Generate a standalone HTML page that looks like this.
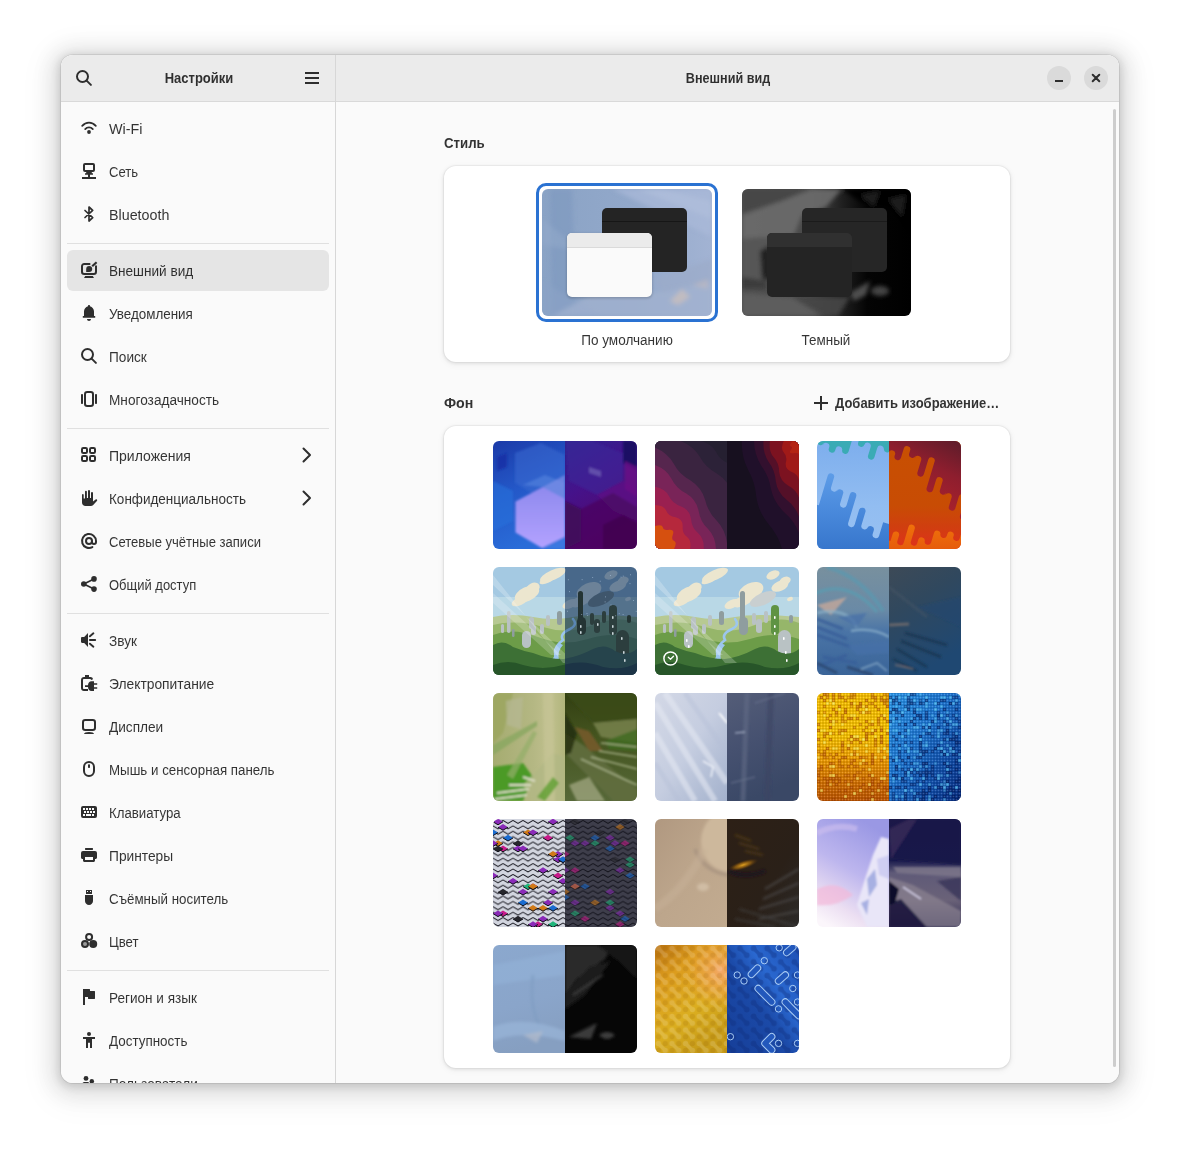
<!DOCTYPE html>
<html lang="ru"><head><meta charset="utf-8"><title>Настройки — Внешний вид</title>
<style>
html,body{margin:0;padding:0}
body{width:1180px;height:1150px;background:#fff;position:relative;overflow:hidden;
 font-family:"Liberation Sans",sans-serif;font-size:14px;line-height:20px;color:rgba(0,0,0,.8)}
.win{position:absolute;left:61px;top:55px;width:1058px;height:1028px;border-radius:12px;overflow:hidden;background:#fafafa}
.shadow{position:absolute;left:61px;top:55px;width:1058px;height:1028px;border-radius:12px;
 box-shadow:0 0 0 1px rgba(0,0,0,.07),0 2px 8px 2px rgba(0,0,0,.13),0 3px 20px 10px rgba(0,0,0,.09),0 6px 32px 16px rgba(0,0,0,.04)}
.hdr{position:absolute;left:0;top:0;width:1058px;height:46px;background:#ebebeb;border-bottom:1px solid #d9d9d9}
.vsep{position:absolute;left:274px;top:0;width:1px;height:1028px;background:#d7d7d7}
.t{position:absolute;white-space:nowrap;height:20px}
.ic{position:absolute;display:block;overflow:visible}
.row{position:absolute;left:6px;width:262px;height:41px;border-radius:6px}
.row.sel{background:#e5e5e5}
.sep{position:absolute;left:6px;width:262px;height:1px;background:#e0e0e0}
.wb{position:absolute;top:11px;width:24px;height:24px;border-radius:12px;background:#dadada}
.card{position:absolute;left:383px;width:566px;background:#fff;border-radius:12px;
 box-shadow:0 0 0 1px rgba(0,0,0,.03),0 1px 3px 1px rgba(0,0,0,.07),0 2px 6px 2px rgba(0,0,0,.03)}
.th{position:absolute;width:144px;height:108px;border-radius:6px;overflow:hidden;display:block}
.sb{position:absolute;left:1052px;top:54px;width:3px;height:958px;border-radius:2px;background:#cdcdcd}
</style></head><body>
<div class="shadow"></div>
<div class="win">
<div class="hdr"></div>
<div class="vsep"></div>

<svg class="ic" style="left:15px;top:15px" width="16" height="16" viewBox="0 0 16 16" ><circle cx="6.5" cy="6.5" r="5.5" fill="none" stroke="#2e2e2e" stroke-width="2"/><path d="M10.6 10.600 L14.9 14.9" fill="none" stroke="#2e2e2e" stroke-width="2" stroke-linecap="round"/></svg>
<div class="t " style="top:13px;left:-12.5px;width:300px;text-align:center;transform:scaleX(0.8961);font-weight:700;font-size:14.5px;"><span id="tx0">Настройки</span></div>
<svg class="ic" style="left:244px;top:17px" width="14" height="12" viewBox="0 0 14 12"><path d="M0 0h14v2H0zM0 5h14v2H0zM0 10h14v2H0z" fill="#2e2e2e"/></svg>
<div class="t " style="top:13px;left:516.7px;width:300px;text-align:center;transform:scaleX(0.8689);font-weight:700;font-size:14.5px;"><span id="tx1">Внешний вид</span></div>
<div class="wb" style="left:986px"></div><div class="wb" style="left:1023px"></div>
<svg class="ic" style="left:986px;top:11px" width="24" height="24" viewBox="0 0 24 24"><rect x="8" y="14" width="8" height="2" fill="#2e2e2e"/></svg>
<svg class="ic" style="left:1023px;top:11px" width="24" height="24" viewBox="0 0 24 24"><path d="M8.700 8.700 L15.300 15.300 M15.300 8.700 L8.700 15.300" stroke="#2e2e2e" stroke-width="2" stroke-linecap="round" fill="none"/></svg>
<div class="sep" style="top:188px"></div>
<div class="sep" style="top:373px"></div>
<div class="sep" style="top:558px"></div>
<div class="sep" style="top:915px"></div>
<div class="row" style="top:53px"></div>
<svg class="ic" style="left:20px;top:65px" width="16" height="16" viewBox="0 0 16 16" ><path d="M1.2 5.9 C4.9 1.6 11.1 1.6 14.8 5.9" fill="none" stroke="#2e2e2e" stroke-width="1.8" stroke-linecap="round"/><path d="M4.2 9.1 C6.2 6.7 9.8 6.7 11.8 9.1" fill="none" stroke="#2e2e2e" stroke-width="1.8" stroke-linecap="round"/><circle cx="8" cy="12" r="1.9" fill="#2e2e2e"/></svg>
<div class="t " style="top:64px;left:48px;transform-origin:0 50%;transform:scaleX(1.0262);"><span id="tx2">Wi-Fi</span></div>
<div class="row" style="top:96px"></div>
<svg class="ic" style="left:20px;top:108px" width="16" height="16" viewBox="0 0 16 16" ><rect x="3" y="1" width="10" height="7" rx="1" fill="none" stroke="#2e2e2e" stroke-width="2"/><path d="M5.2 9h5.6v1.2H12v1.6H9V14h6v2H1v-2h6v-2.2H4v-1.6h1.2z" fill="#2e2e2e"/></svg>
<div class="t " style="top:107px;left:48px;transform-origin:0 50%;transform:scaleX(0.9333);"><span id="tx3">Сеть</span></div>
<div class="row" style="top:139px"></div>
<svg class="ic" style="left:20px;top:151px" width="16" height="16" viewBox="0 0 16 16" ><path d="M4 4.5 L11.7 11.6 L8 15 V1 L11.7 4.4 L4 11.5" fill="none" stroke="#2e2e2e" stroke-width="1.7" stroke-linecap="round" stroke-linejoin="round"/></svg>
<div class="t " style="top:150px;left:48px;transform-origin:0 50%;transform:scaleX(1.0208);"><span id="tx4">Bluetooth</span></div>
<div class="row sel" style="top:195px"></div>
<svg class="ic" style="left:20px;top:207px" width="16" height="16" viewBox="0 0 16 16" ><path d="M9.3 2 H3.2 A2.2 2.2 0 0 0 1 4.2 V9.8 A2.2 2.2 0 0 0 3.2 12 H12.8 A2.2 2.2 0 0 0 15 9.8 V3.4" fill="none" stroke="#2e2e2e" stroke-width="2" stroke-linecap="butt"/><path d="M15.6 0.3 L11.2 4.2" fill="none" stroke="#2e2e2e" stroke-width="2.2"/><path d="M5.2 10 V7 A3 3 0 1 1 8.2 10 Z" fill="#2e2e2e"/><path d="M4.2 14 h7.6 l1.2 2 h-10z" fill="#2e2e2e"/></svg>
<div class="t " style="top:206px;left:48px;transform-origin:0 50%;transform:scaleX(0.9695);"><span id="tx5">Внешний вид</span></div>
<div class="row" style="top:238px"></div>
<svg class="ic" style="left:20px;top:250px" width="16" height="16" viewBox="0 0 16 16" ><path d="M8 0c-.6 0-1 .4-1 1v.3C4.7 1.9 3 4 3 6.5V11H1.8v1.8h12.4V11H13V6.5C13 4 11.300 1.9 9 1.3V1c0-.6-.4-1-1-1z" fill="#2e2e2e"/><path d="M6 14h4c0 1.100-.9 2-2 2s-2-.9-2-2z" fill="#2e2e2e"/></svg>
<div class="t " style="top:249px;left:48px;transform-origin:0 50%;transform:scaleX(0.9583);"><span id="tx6">Уведомления</span></div>
<div class="row" style="top:281px"></div>
<svg class="ic" style="left:20px;top:293px" width="16" height="16" viewBox="0 0 16 16" ><circle cx="6.5" cy="6.5" r="5.5" fill="none" stroke="#2e2e2e" stroke-width="2"/><path d="M10.6 10.600 L14.9 14.9" fill="none" stroke="#2e2e2e" stroke-width="2" stroke-linecap="round"/></svg>
<div class="t " style="top:292px;left:48px;transform-origin:0 50%;transform:scaleX(0.9737);"><span id="tx7">Поиск</span></div>
<div class="row" style="top:324px"></div>
<svg class="ic" style="left:20px;top:336px" width="16" height="16" viewBox="0 0 16 16" ><rect x="4" y="1" width="8" height="14" rx="2.2" fill="none" stroke="#2e2e2e" stroke-width="2"/><rect x="0" y="3" width="2" height="10" rx=".8" fill="#2e2e2e"/><rect x="14" y="3" width="2" height="10" rx=".8" fill="#2e2e2e"/></svg>
<div class="t " style="top:335px;left:48px;transform-origin:0 50%;transform:scaleX(0.9750);"><span id="tx8">Многозадачность</span></div>
<div class="row" style="top:380px"></div>
<svg class="ic" style="left:20px;top:392px" width="16" height="16" viewBox="0 0 16 16" ><rect x="1" y="1" width="5" height="5" rx="1.300" fill="none" stroke="#2e2e2e" stroke-width="2"/><rect x="1" y="9" width="5" height="5" rx="1.300" fill="none" stroke="#2e2e2e" stroke-width="2"/><rect x="9" y="1" width="5" height="5" rx="1.300" fill="none" stroke="#2e2e2e" stroke-width="2"/><rect x="9" y="9" width="5" height="5" rx="1.300" fill="none" stroke="#2e2e2e" stroke-width="2"/></svg>
<div class="t " style="top:391px;left:48px;transform-origin:0 50%;transform:scaleX(1.0002);"><span id="tx9">Приложения</span></div>
<svg class="ic" style="left:238px;top:392px" width="16" height="16" viewBox="0 0 16 16" ><path d="M4.500 1.500 L11 8 L4.500 14.500" fill="none" stroke="#2e2e2e" stroke-width="2" stroke-linecap="round" stroke-linejoin="round"/></svg>
<div class="row" style="top:423px"></div>
<svg class="ic" style="left:20px;top:435px" width="16" height="16" viewBox="0 0 16 16" ><path d="M1 4.900a.85.85 0 0 1 1.700 0V8.500H4V1.800a.95.95 0 0 1 1.900 0V8H7V.95a1 1 0 0 1 2 0V8h1V2.900a1 1 0 0 1 2 0V11.500l2.600-2a.95.95 0 0 1 1.300 1.400L12.200 15c-.6.600-1.400 1-2.400 1H4.500C2.500 16 1 14.500 1 12.500z" fill="#2e2e2e"/></svg>
<div class="t " style="top:434px;left:48px;transform-origin:0 50%;transform:scaleX(0.9645);"><span id="tx10">Конфиденциальность</span></div>
<svg class="ic" style="left:238px;top:435px" width="16" height="16" viewBox="0 0 16 16" ><path d="M4.500 1.500 L11 8 L4.500 14.500" fill="none" stroke="#2e2e2e" stroke-width="2" stroke-linecap="round" stroke-linejoin="round"/></svg>
<div class="row" style="top:466px"></div>
<svg class="ic" style="left:20px;top:478px" width="16" height="16" viewBox="0 0 16 16" ><path d="M11.400 14.100 A7 7 0 1 1 15 8 v1 a2 2 0 0 1 -4 0 V8" fill="none" stroke="#2e2e2e" stroke-width="2" stroke-linecap="round"/><circle cx="8" cy="8" r="3" fill="none" stroke="#2e2e2e" stroke-width="2"/></svg>
<div class="t " style="top:477px;left:48px;transform-origin:0 50%;transform:scaleX(0.9321);"><span id="tx11">Сетевые учётные записи</span></div>
<div class="row" style="top:509px"></div>
<svg class="ic" style="left:20px;top:521px" width="16" height="16" viewBox="0 0 16 16" ><circle cx="2.800" cy="8" r="2.800" fill="#2e2e2e"/><circle cx="13" cy="2.900" r="2.800" fill="#2e2e2e"/><circle cx="13" cy="13.100" r="2.800" fill="#2e2e2e"/><path d="M13 2.900 L2.800 8 L13 13.100" fill="none" stroke="#2e2e2e" stroke-width="1.700"/></svg>
<div class="t " style="top:520px;left:48px;transform-origin:0 50%;transform:scaleX(0.9270);"><span id="tx12">Общий доступ</span></div>
<div class="row" style="top:565px"></div>
<svg class="ic" style="left:20px;top:577px" width="16" height="16" viewBox="0 0 16 16" ><path d="M7 1v14L3.200 11H1.200C.5 11 0 10.500 0 9.800V6.200C0 5.500.5 5 1.200 5h2z" fill="#2e2e2e"/><path d="M8.900 4.300L12.400 1.300M8.900 8h5.300M8.900 11.700l3.500 3" fill="none" stroke="#2e2e2e" stroke-width="1.900" stroke-linecap="round"/></svg>
<div class="t " style="top:576px;left:48px;transform-origin:0 50%;transform:scaleX(0.9719);"><span id="tx13">Звук</span></div>
<div class="row" style="top:608px"></div>
<svg class="ic" style="left:20px;top:620px" width="16" height="16" viewBox="0 0 16 16" ><path d="M4 0h4v2h1.500c1.300 0 2.300.9 2.500 2.200L10.200 5C10 4.400 9.600 4 9 4H3c-.6 0-1 .4-1 1v8c0 .6.400 1 1 1h4v2H3c-1.700 0-3-1.300-3-3V5c0-1.700 1.300-3 3-3h1z" fill="#2e2e2e"/><path d="M13 6.300v1.900h3.200v1.500H13v2.600h3.200v1.500H13V16h-2.500C8.300 16 7 13.800 7 11.900H4v-1.600h3C7 8.300 8.300 6.300 10.500 6.300z" fill="#2e2e2e"/></svg>
<div class="t " style="top:619px;left:48px;transform-origin:0 50%;transform:scaleX(0.9869);"><span id="tx14">Электропитание</span></div>
<div class="row" style="top:651px"></div>
<svg class="ic" style="left:20px;top:663px" width="16" height="16" viewBox="0 0 16 16" ><rect x="2" y="2" width="12" height="10" rx="2.200" fill="none" stroke="#2e2e2e" stroke-width="2"/><path d="M3 16c0-1.200 2-2 5-2s5 .8 5 2z" fill="#2e2e2e"/></svg>
<div class="t " style="top:662px;left:48px;transform-origin:0 50%;transform:scaleX(0.9746);"><span id="tx15">Дисплеи</span></div>
<div class="row" style="top:694px"></div>
<svg class="ic" style="left:20px;top:706px" width="16" height="16" viewBox="0 0 16 16" ><rect x="3" y="1" width="10" height="14" rx="5" fill="none" stroke="#2e2e2e" stroke-width="2"/><rect x="7" y="3.200" width="2" height="3.800" rx=".8" fill="#2e2e2e"/></svg>
<div class="t " style="top:705px;left:48px;transform-origin:0 50%;transform:scaleX(0.9514);"><span id="tx16">Мышь и сенсорная панель</span></div>
<div class="row" style="top:737px"></div>
<svg class="ic" style="left:20px;top:749px" width="16" height="16" viewBox="0 0 16 16" ><path fill-rule="evenodd" d="M2 2h12a2 2 0 0 1 2 2v8a2 2 0 0 1-2 2H2a2 2 0 0 1-2-2V4a2 2 0 0 1 2-2zM2 4h2v2h-2zM5 4h2v2h-2zM8 4h2v2h-2zM11 4h2v2h-2zM3 7h2v2h-2zM6 7h2v2h-2zM9 7h2v2h-2zM12 7h2v2h-2zM2 10h2v2h-2zM5 10h5v2h-5zM11 10h2v2h-2z" fill="#2e2e2e"/></svg>
<div class="t " style="top:748px;left:48px;transform-origin:0 50%;transform:scaleX(0.9450);"><span id="tx17">Клавиатура</span></div>
<div class="row" style="top:780px"></div>
<svg class="ic" style="left:20px;top:792px" width="16" height="16" viewBox="0 0 16 16" ><rect x="4" y="1" width="8" height="1.900" rx=".6" fill="#2e2e2e"/><path fill-rule="evenodd" d="M2 4h12a2 2 0 0 1 2 2v4.500c0 .8-.7 1.500-1.500 1.500H14v1.500c0 .8-.7 1.500-1.500 1.500h-9C2.700 15 2 14.300 2 13.500V12h-.5C.7 12 0 11.300 0 10.500V6a2 2 0 0 1 2-2zM4 10h8v3H4z" fill="#2e2e2e"/></svg>
<div class="t " style="top:791px;left:48px;transform-origin:0 50%;transform:scaleX(0.9814);"><span id="tx18">Принтеры</span></div>
<div class="row" style="top:823px"></div>
<svg class="ic" style="left:20px;top:835px" width="16" height="16" viewBox="0 0 16 16" ><path fill-rule="evenodd" d="M5.300 0h5.400c.2 0 .3.100.3.300V4H5V.3c0-.2.100-.3.300-.3zM6 1.100h1v1H6zM9 1.100h1v1H9z" fill="#2e2e2e"/><path d="M4 5.100h8V11c0 2.200-1.800 4-4 4s-4-1.800-4-4z" fill="#2e2e2e"/></svg>
<div class="t " style="top:834px;left:48px;transform-origin:0 50%;transform:scaleX(0.9533);"><span id="tx19">Съёмный носитель</span></div>
<div class="row" style="top:866px"></div>
<svg class="ic" style="left:20px;top:878px" width="16" height="16" viewBox="0 0 16 16" ><circle cx="8.100" cy="4" r="3" fill="none" stroke="#2e2e2e" stroke-width="2"/><circle cx="4" cy="11.100" r="3" fill="#9a9a9a" stroke="#2e2e2e" stroke-width="2"/><circle cx="12.200" cy="11.100" r="4" fill="#2e2e2e"/></svg>
<div class="t " style="top:877px;left:48px;transform-origin:0 50%;transform:scaleX(0.9426);"><span id="tx20">Цвет</span></div>
<div class="row" style="top:922px"></div>
<svg class="ic" style="left:20px;top:934px" width="16" height="16" viewBox="0 0 16 16" ><path d="M2 0h6.500c.3 0 .5.200.5.500V2h4.500c.3 0 .5.200.5.500v7c0 .3-.2.500-.5.500H7.500C7.200 10 7 9.800 7 9.500V8H4v8H2z" fill="#2e2e2e"/></svg>
<div class="t " style="top:933px;left:48px;transform-origin:0 50%;transform:scaleX(0.9689);"><span id="tx21">Регион и язык</span></div>
<div class="row" style="top:965px"></div>
<svg class="ic" style="left:20px;top:977px" width="16" height="16" viewBox="0 0 16 16" ><circle cx="8" cy="2" r="2" fill="#2e2e2e"/><path d="M2 5h12v2h-3v9H9v-5.300H7V16H5V7H2z" fill="#2e2e2e"/></svg>
<div class="t " style="top:976px;left:48px;transform-origin:0 50%;transform:scaleX(0.9587);"><span id="tx22">Доступность</span></div>
<div class="row" style="top:1008px"></div>
<svg class="ic" style="left:20px;top:1020px" width="16" height="16" viewBox="0 0 16 16" ><circle cx="5" cy="3.400" r="2.400" fill="#2e2e2e"/><circle cx="10.800" cy="6.300" r="2.200" fill="#2e2e2e"/><path d="M1.300 9c0-1.200 1-2 2.200-2h3c1.200 0 2 .8 2 2v3H1.300zM8.500 13v-2.500c0-.8.700-1.500 1.500-1.500h2c1.100 0 2 .9 2 2v2z" fill="#2e2e2e"/></svg>
<div class="t " style="top:1019px;left:48px;transform-origin:0 50%;transform:scaleX(0.9711);"><span id="tx23">Пользователи</span></div>
<div class="t " style="top:78px;left:383px;transform-origin:0 50%;transform:scaleX(0.9130);font-weight:700;font-size:14.5px;"><span id="tx24">Стиль</span></div>
<div class="card" style="top:111px;height:196px"></div>
<div style="position:absolute;left:475px;top:128px;width:176px;height:133px;border:3px solid #2a72d2;border-radius:10px"></div>
<svg class="th" style="left:481px;top:134px;width:170px;height:127px" viewBox="0 0 170 127"><defs><linearGradient id="lightprev" x1="0" y1="0" x2="1" y2="0"><stop offset="0" stop-color="#8aa3c5"/><stop offset=".5" stop-color="#92a8ca"/><stop offset="1" stop-color="#a2b3d3"/></linearGradient><filter id="blurB"><feGaussianBlur stdDeviation="2"/></filter><filter id="blurA"><feGaussianBlur stdDeviation="1"/></filter></defs><rect width="170" height="127" fill="url(#lightprev)"/><g filter="url(#blurB)"><path d="M8 0 L30 0 L34 127 L10 127z" fill="#7c98be" opacity=".55"/><path d="M70 0 L170 48 L170 0z" fill="#a9b9d8" opacity=".7"/><path d="M95 0 L170 30 L170 12 L120 0z" fill="#b3c0dc" opacity=".6"/><path d="M0 92 L60 127 L0 127z" fill="#8aa3c6" opacity=".7"/><path d="M10 127 L60 100 L110 104 L170 92 L170 127z" fill="#a1b1cf" opacity=".75"/><path d="M112 90 L170 70 L170 92 L120 104z" fill="#9babc9" opacity=".7"/><path d="M128 112 L140 100 L148 108 L136 116z" fill="#cfc0ba" opacity=".7"/><path d="M150 96 L166 90 L166 100z" fill="#c8bcbc" opacity=".5"/><path d="M0 30 L40 62 L0 56z" fill="#93abcc" opacity=".5"/></g><rect x="60" y="19" width="85" height="64" rx="5" fill="#242424"/><rect x="60" y="32" width="85" height="1" fill="#161616"/><rect x="24.500" y="44.500" width="86" height="65" rx="5.500" fill="rgba(0,0,0,.18)" filter="url(#blurA)"/><rect x="25" y="44" width="85" height="64" rx="5" fill="#fafafa"/><path d="M25 58V49a5 5 0 0 1 5-5h75a5 5 0 0 1 5 5v9z" fill="#ebebeb"/><rect x="25" y="58" width="85" height="1" fill="#dadada"/></svg>
<svg class="th" style="left:681px;top:134px;width:169px;height:127px" viewBox="0 0 169 127"><defs><linearGradient id="darkprev" x1="0" y1="0" x2="1" y2="0"><stop offset="0" stop-color="#505050"/><stop offset=".4" stop-color="#4a4a4a"/><stop offset=".6" stop-color="#1e1e1e"/><stop offset=".74" stop-color="#040404"/><stop offset="1" stop-color="#000"/></linearGradient></defs><rect width="169" height="127" fill="url(#darkprev)"/><g filter="url(#blurB)"><path d="M0 0 L70 0 L40 12 L0 24z" fill="#474747"/><path d="M0 26 L40 12 L70 0 L100 0 L84 18 L60 26 L52 46 L0 50z" fill="#6c6c6c" opacity=".9"/><path d="M0 50 L52 46 L50 90 L0 96z" fill="#575757" opacity=".9"/><path d="M18 62 L28 56 L30 92 L20 90z" fill="#1c1c1c" opacity=".9"/><path d="M0 88 L24 92 L24 100 L0 100z" fill="#3a3a3a" opacity=".9"/><path d="M0 104 L50 108 L90 127 L0 127z" fill="#5e5e5e" opacity=".9"/><path d="M50 108 L108 108 L96 127 L80 127z" fill="#454545" opacity=".9"/><path d="M100 0 L169 0 L169 50 L150 20 L120 14z" fill="#050505"/><path d="M118 6 L138 2 L132 18z M146 10 L164 6 L160 28z" fill="#222" opacity=".9"/><path d="M108 104 L128 92 L124 106 L112 112z" fill="#555" opacity=".9"/><ellipse cx="138" cy="102" rx="9" ry="5" fill="#4a4a4a" opacity=".9"/></g><rect x="60" y="19" width="85" height="64" rx="5" fill="#262626"/><rect x="60" y="32" width="85" height="1" fill="#1b1b1b"/><rect x="25" y="44" width="85" height="64" rx="5" fill="#242424"/><path d="M25 58V49a5 5 0 0 1 5-5h75a5 5 0 0 1 5 5v9z" fill="#303030"/></svg>
<div class="t " style="top:275px;left:415.70000000000005px;width:300px;text-align:center;transform:scaleX(0.9682);"><span id="tx25">По умолчанию</span></div>
<div class="t " style="top:275px;left:615.3px;width:300px;text-align:center;transform:scaleX(0.9600);"><span id="tx26">Темный</span></div>
<div class="t " style="top:338px;left:383px;transform-origin:0 50%;transform:scaleX(0.9795);font-weight:700;font-size:14.5px;"><span id="tx27">Фон</span></div>
<svg class="ic" style="left:753px;top:341px" width="14" height="14" viewBox="0 0 14 14"><path d="M6 0h2v6h6v2H8v6H6V8H0V6h6z" fill="#2e2e2e"/></svg>
<div class="t " style="top:338px;left:774px;transform-origin:0 50%;transform:scaleX(0.8962);font-weight:700;font-size:14.5px;"><span id="tx28">Добавить изображение…</span></div>
<div class="card" style="top:371px;height:642px"></div>
<svg class="th" style="left:432px;top:386px" width="144" height="108" viewBox="0 0 144 108"><defs><clipPath id="L0"><rect x="0" y="0" width="72" height="108"/></clipPath><clipPath id="R0"><rect x="72" y="0" width="72" height="108"/></clipPath>
<linearGradient id="a0" x1="0" y1="0" x2=".3" y2="1"><stop offset="0" stop-color="#1b3aa8"/><stop offset=".5" stop-color="#2458c8"/><stop offset="1" stop-color="#2a6cd8"/></linearGradient>
<linearGradient id="b0" x1="0" y1="0" x2=".4" y2="1"><stop offset="0" stop-color="#2c2590"/><stop offset=".45" stop-color="#45128a"/><stop offset="1" stop-color="#54086a"/></linearGradient>
<linearGradient id="c0" x1="0" y1="0" x2="0" y2="1"><stop offset="0" stop-color="#8f8aee"/><stop offset="1" stop-color="#b3a2ff"/></linearGradient>
<filter id="f0"><feGaussianBlur stdDeviation=".8"/></filter></defs>
<g clip-path="url(#L0)"><rect width="72" height="108" fill="url(#a0)"/>
<g filter="url(#f0)">
<path d="M22 12 L48 2 L72 14 L72 44 L46 56 L22 42z" fill="#3a6ad0" opacity=".55"/>
<path d="M4 16 L14 12 L14 26 L4 30z" fill="#1226a0" opacity=".6"/>
<path d="M0 40 L20 50 L20 80 L0 90z" fill="#2a70da" opacity=".6"/>
<path d="M30 44 L52 34 L72 42 L72 62 L50 46z" fill="#5a86e0" opacity=".55"/>
<path d="M50 46 L72 57.700 L72 95.700 L49 107 L22.500 91.600 L22.500 60.400z" fill="url(#c0)"/>
<path d="M50 46 L72 34 L72 58z" fill="#7f8fe8" opacity=".7"/>
<path d="M49 108 L72 96 L72 108z" fill="#3a78e0"/>
</g></g>
<g clip-path="url(#R0)"><rect x="72" width="72" height="108" fill="url(#b0)"/>
<g filter="url(#f0)">
<path d="M72 0 L100 0 L130 12 L130 40 L104 54 L76 40z" fill="#3a2498" opacity=".6"/>
<path d="M130 0 L144 0 L144 30 L130 22z" fill="#1a1060" opacity=".9"/>
<path d="M96 26 L108 30 L108 36 L96 32z" fill="#6a5ab0" opacity=".8"/>
<path d="M104 54 L130 40 L144 48 L144 80 L120 70z" fill="#5c0f86" opacity=".8"/>
<path d="M72 60 L88 68 L120 52 L144 66 L144 108 L72 108z" fill="#4a0760" opacity=".75"/>
<path d="M88 68 L88 100 L72 108 L72 60z" fill="#3c0a58" opacity=".7"/>
<path d="M132 20 L144 26 L144 56 L132 48z" fill="#6a0a86" opacity=".8"/>
<path d="M110 84 L130 74 L144 82 L144 108 L110 108z" fill="#3a0648" opacity=".6"/>
</g></g></svg>
<svg class="th" style="left:594px;top:386px" width="144" height="108" viewBox="0 0 144 108"><defs><clipPath id="L1"><rect x="0" y="0" width="72" height="108"/></clipPath><clipPath id="R1"><rect x="72" y="0" width="72" height="108"/></clipPath></defs><g clip-path="url(#L1)"><rect width="72" height="108" fill="#252031"/><path d="M-5 115 L-5 -5.0 L46.0 -5 L46.0 0.0 Q56.8 2.9 61.0 10.8 Q64.8 19.0 74.4 22.8 Q83.3 27.1 85.2 36.8 Q86.4 47.0 93.4 52.8 Q100.0 58.9 100.0 70.0 L100.0 115z" fill="#2c2238"/><path d="M-5 115 L-5 -5.0 L25.8 -5 L25.8 0.0 Q38.6 5.3 44.8 15.7 Q50.6 26.5 62.2 32.7 Q73.1 39.5 77.1 51.7 Q80.3 64.5 89.3 72.7 Q97.9 81.3 100.0 95.0 L100.0 115z" fill="#3a2440"/><path d="M-5 115 L-5 1.5  L0.0 6.5 Q12.6 12.0 18.6 22.4 Q24.2 33.2 35.6 39.5 Q46.4 46.4 50.0 58.6 Q53.0 71.4 61.8 79.7 Q70.2 88.4 72.0 102.0 L72.0 115z" fill="#56264e"/><path d="M-5 115 L-5 19.1  L0.0 24.1 Q11.6 28.5 16.5 37.8 Q21.0 47.3 31.3 52.6 Q41.0 58.4 43.5 69.4 Q45.4 80.9 53.1 88.1 Q60.4 95.6 61.0 108.0 L61.0 115z" fill="#792458"/><path d="M-5 115 L-5 40.8  L0.0 45.8 Q10.2 47.8 13.9 55.0 Q17.2 62.4 26.3 65.4 Q34.6 68.9 36.0 77.8 Q36.7 87.3 43.2 92.3 Q49.3 97.6 48.8 108.0 L48.8 115z" fill="#9a2050"/><path d="M-5 115 L-5 59.0  L0.0 64.0 Q8.8 64.2 11.1 69.5 Q13.1 75.2 20.7 76.3 Q27.7 77.9 27.7 85.1 Q27.1 92.8 32.1 95.9 Q36.8 99.4 35.0 108.0 L35.0 115z" fill="#b6283c"/><path d="M-5 115 L-5 80.0  L0.0 85.0 Q7.1 83.0 7.9 86.2 Q8.2 89.8 14.2 88.7 Q19.5 88.2 18.0 93.3 Q15.8 99.0 19.3 100.0 Q22.3 101.4 19.0 108.0 L19.0 115z" fill="#d6500f"/></g><g clip-path="url(#R1)"><rect x="72" width="72" height="108" fill="#17101f"/><path d="M86.8 -5 L86.8 0.0 Q86.3 15.6 92.9 28.5 Q100.1 41.2 101.3 56.1 Q103.4 70.7 113.0 82.5 Q123.2 94.0 127.0 108.0 L150 108.0 L150 -5z" fill="#20102a"/><path d="M99.0 -5 L99.0 0.0 Q99.3 14.1 106.4 24.9 Q114.1 35.4 116.1 48.6 Q118.9 61.5 128.9 70.9 Q139.5 79.9 144.0 92.0 L150 92.0 L150 -5z" fill="#32102e"/><path d="M108.5 -5 L108.5 0.0 Q107.6 12.0 113.5 20.7 Q120.1 29.2 120.8 40.4 Q122.4 51.2 131.3 58.6 Q140.7 65.7 144.0 75.7 L150 75.7 L150 -5z" fill="#541028"/><path d="M115.0 -5 L115.0 0.0 Q113.4 9.8 118.5 16.1 Q124.1 22.1 124.2 31.1 Q125.0 39.6 133.0 44.5 Q141.5 49.0 144.0 56.7 L150 56.7 L150 -5z" fill="#7c1220"/><path d="M128.8 -5 L128.8 0.0 Q125.2 7.0 128.6 11.3 Q132.7 15.3 130.8 21.7 Q129.8 27.7 136.2 30.8 Q143.3 33.7 144.0 39.0 L150 39.0 L150 -5z" fill="#a01a18"/><path d="M138.0 -5 L138.0 0.0 Q133.3 4.1 135.6 5.2 Q138.5 6.0 135.5 9.4 Q133.3 12.4 138.6 12.2 Q144.4 11.7 144.0 14.0 L150 14.0 L150 -5z" fill="#b42414"/></g></svg>
<svg class="th" style="left:756px;top:386px" width="144" height="108" viewBox="0 0 144 108"><defs><clipPath id="L2"><rect x="0" y="0" width="72" height="108"/></clipPath><clipPath id="R2"><rect x="72" y="0" width="72" height="108"/></clipPath>
<linearGradient id="a2" x1="0" y1="0" x2="0" y2="108" gradientUnits="userSpaceOnUse"><stop offset="0" stop-color="#7daeed"/><stop offset=".6" stop-color="#92bdf1"/><stop offset="1" stop-color="#98c1f2"/></linearGradient>
<linearGradient id="b2" x1="0" y1="30" x2="0" y2="108" gradientUnits="userSpaceOnUse"><stop offset="0" stop-color="#5e9de8"/><stop offset=".5" stop-color="#4a8adc"/><stop offset="1" stop-color="#3776cc"/></linearGradient>
<linearGradient id="c2" x1="144" y1="0" x2="110" y2="70" gradientUnits="userSpaceOnUse"><stop offset="0" stop-color="#5c1c2a"/><stop offset=".45" stop-color="#8e1e2e"/><stop offset="1" stop-color="#ae222c"/></linearGradient>
<linearGradient id="d2" x1="0" y1="82" x2="0" y2="108" gradientUnits="userSpaceOnUse"><stop offset="0" stop-color="#f0720a"/><stop offset="1" stop-color="#e65c0c"/></linearGradient>
<linearGradient id="e2" x1="0" y1="0" x2="0" y2="108" gradientUnits="userSpaceOnUse"><stop offset="0" stop-color="#c85002"/><stop offset=".6" stop-color="#c84c04"/><stop offset=".8" stop-color="#d03e10"/><stop offset="1" stop-color="#e0301c"/></linearGradient>
</defs>
<g clip-path="url(#L2)"><rect width="72" height="108" fill="url(#a2)"/>
<path transform="matrix(0.958 0.287 0.287 -0.958 0 0)" d="M0.30 300 L0.30 0.30 A3.3 3.3 0 0 1 6.90 0.30 L6.90 -2.30 A3.3 3.3 0 0 0 13.50 -2.30 L13.50 -3.80 A3.3 3.3 0 0 1 20.10 -3.80 L20.10 -2.00 A3.3 3.3 0 0 0 26.70 -2.00 L26.70 -1.10 A3.3 3.3 0 0 1 33.30 -1.10 L33.30 16.70 A3.3 3.3 0 0 0 39.90 16.70 L39.90 10.20 A3.3 3.3 0 0 1 46.50 10.20 L46.50 9.70 A3.3 3.3 0 0 0 53.10 9.70 L53.10 0.80 A3.3 3.3 0 0 1 59.70 0.80 L59.70 10.60 A3.3 3.3 0 0 0 66.30 10.60 L66.30 12.50 A3.3 3.3 0 0 1 72.90 12.50 L72.90 14.70 A3.3 3.3 0 0 0 79.50 14.70 L79.50 13.30 A3.3 3.3 0 0 1 86.10 13.30 L86.10 300z" fill="#3aabb5"/>
<clipPath id="k2"><path transform="matrix(0.958 0.287 0.287 -0.958 0 0)" d="M6.87 -300 L6.87 -86.67 A3.325 3.325 0 0 1 13.52 -86.67 L13.53 -61.00 L20.18 -61.00 L20.18 -29.93 A3.325 3.325 0 0 0 26.82 -29.93 L26.82 -40.27 A3.325 3.325 0 0 1 33.48 -40.27 L33.47 -42.83 A3.325 3.325 0 0 0 40.12 -42.83 L40.12 -53.07 A3.325 3.325 0 0 1 46.78 -53.07 L46.77 -41.83 A3.325 3.325 0 0 0 53.43 -41.83 L53.42 -69.38 A3.325 3.325 0 0 1 60.08 -69.38 L60.08 -54.12 A3.325 3.325 0 0 0 66.73 -54.12 L66.73 -67.88 A3.325 3.325 0 0 1 73.38 -67.88 L73.38 -69.42 A3.325 3.325 0 0 0 80.03 -69.42 L80.02 -73.08 A3.325 3.325 0 0 1 86.67 -73.08 L86.67 -58.80 L93.33 -58.80 L93.33 -58.80 L99.98 -58.80 L99.98 -58.80 L106.63 -58.80 L106.63 -300z"/></clipPath>
<g clip-path="url(#k2)"><rect width="72" height="108" fill="url(#b2)"/></g>
</g>
<g clip-path="url(#R2)"><rect x="72" width="72" height="108" fill="url(#e2)"/>
<clipPath id="m2"><path transform="matrix(0.958 0.287 0.287 -0.958 0 0)" d="M58.67 300 L58.67 1.33 A3.325 3.325 0 0 1 65.33 1.33 L65.32 8.00 L71.97 8.00 L71.97 9.38 A3.325 3.325 0 0 0 78.62 9.38 L78.62 8.03 A3.325 3.325 0 0 1 85.28 8.03 L85.27 17.78 A3.325 3.325 0 0 0 91.92 17.78 L91.92 14.43 A3.325 3.325 0 0 1 98.58 14.43 L98.58 11.48 A3.325 3.325 0 0 0 105.23 11.48 L105.22 -1.17 A3.325 3.325 0 0 1 111.88 -1.17 L111.88 14.07 A3.325 3.325 0 0 0 118.53 14.07 L118.52 -13.57 A3.325 3.325 0 0 1 125.17 -13.57 L125.17 -2.62 A3.325 3.325 0 0 0 131.82 -2.62 L131.83 -12.18 A3.325 3.325 0 0 1 138.47 -12.18 L138.48 -15.32 A3.325 3.325 0 0 0 145.12 -15.32 L145.12 -24.88 A3.325 3.325 0 0 1 151.77 -24.88 L151.78 -12.62 A3.325 3.325 0 0 0 158.43 -12.62 L158.43 -30.68 A3.325 3.325 0 0 1 165.07 -30.68 L165.08 -23.32 A3.325 3.325 0 0 0 171.72 -23.32 L171.72 300z"/></clipPath>
<g clip-path="url(#m2)"><rect x="72" width="72" height="108" fill="url(#c2)"/></g>
<clipPath id="n2"><path transform="matrix(0.958 0.287 0.287 -0.958 0 0)" d="M79.47 -300 L79.47 -69.28 A3.275 3.275 0 0 0 86.03 -69.28 L86.03 -76.72 A3.275 3.275 0 0 1 92.58 -76.72 L92.58 -74.80 L99.13 -74.80 L99.12 -67.17 A3.275 3.275 0 0 0 105.68 -67.17 L105.67 -72.72 A3.275 3.275 0 0 1 112.23 -72.72 L112.22 -56.17 A3.275 3.275 0 0 0 118.78 -56.17 L118.78 -69.32 A3.275 3.275 0 0 1 125.33 -69.32 L125.32 -65.38 A3.275 3.275 0 0 0 131.88 -65.38 L131.88 -64.42 A3.275 3.275 0 0 1 138.43 -64.42 L138.42 -54.48 A3.275 3.275 0 0 0 144.97 -54.48 L144.97 -53.43 A3.275 3.275 0 0 1 151.53 -53.43 L151.53 -51.57 A3.275 3.275 0 0 0 158.08 -51.57 L158.07 -52.62 A3.275 3.275 0 0 1 164.62 -52.62 L164.62 -49.27 A3.275 3.275 0 0 0 171.18 -49.27 L171.17 -56.73 A3.275 3.275 0 0 1 177.72 -56.73 L177.72 -300z"/></clipPath>
<g clip-path="url(#n2)"><rect x="72" width="72" height="108" fill="url(#d2)"/></g>
</g></svg>
<svg class="th" style="left:432px;top:512px" width="144" height="108" viewBox="0 0 144 108"><defs><clipPath id="L3"><rect x="0" y="0" width="72" height="108"/></clipPath><clipPath id="R3"><rect x="72" y="0" width="72" height="108"/></clipPath></defs><g clip-path="url(#L3)"><rect x="0" y="0" width="144" height="108" fill="#a4c9e2"/><rect x="0" y="30" width="144" height="25" fill="#b9d8e6"/><ellipse cx="34" cy="27" rx="13" ry="7" fill="#ece6cf" transform="rotate(-24 34 27)"/><ellipse cx="27" cy="34" rx="9" ry="4" fill="#ece6cf" transform="rotate(-24 27 34)"/><ellipse cx="40" cy="21" rx="7" ry="5" fill="#ece6cf" transform="rotate(-24 40 21)"/><ellipse cx="60" cy="8" rx="14" ry="5" fill="#ece6cf" transform="rotate(-24 60 8)"/><ellipse cx="54" cy="13" rx="8" ry="3" fill="#ece6cf" transform="rotate(-24 54 13)"/><ellipse cx="77" cy="37" rx="8" ry="4" fill="#ece6cf" transform="rotate(-24 77 37)"/><ellipse cx="96" cy="24" rx="13" ry="8" fill="#ece6cf" transform="rotate(-24 96 24)"/><ellipse cx="88" cy="34" rx="11" ry="5" fill="#ece6cf" transform="rotate(-24 88 34)"/><ellipse cx="108" cy="32" rx="14" ry="6" fill="#c9cfd0" transform="rotate(-24 108 32)"/><ellipse cx="118" cy="8" rx="7" ry="4" fill="#ece6cf" transform="rotate(-24 118 8)"/><ellipse cx="125" cy="19" rx="9" ry="5" fill="#ece6cf" transform="rotate(-24 125 19)"/><ellipse cx="130" cy="14" rx="6" ry="4" fill="#ece6cf" transform="rotate(-24 130 14)"/><ellipse cx="135" cy="32" rx="3" ry="2" fill="#ece6cf" transform="rotate(-24 135 32)"/><path d="M0 50 Q20 46 40 50 T80 50 T144 50 V70 H0z" fill="#b7c992"/><path d="M0 58 Q25 52 50 60 T100 58 T144 56 V80 H0z" fill="#96b66a"/><path d="M0 68 Q20 60 45 70 Q70 80 95 72 Q120 64 144 72 V95 H0z" fill="#6c9c48"/><rect x="14" y="44" width="3.5" height="22" rx="1.8" fill="#b9c2c4"/><rect x="8" y="57" width="3" height="9" rx="1.5" fill="#b9c2c4"/><rect x="19" y="62" width="2.5" height="8" rx="1.2" fill="#8f9d9f"/><rect x="29" y="64" width="9" height="17" rx="4.5" fill="#b9c2c4"/><rect x="36" y="50" width="5" height="12" rx="2.5" fill="#b9c2c4"/><rect x="38" y="58" width="5" height="10" rx="2.5" fill="#b9c2c4"/><rect x="47" y="57" width="4" height="10" rx="2.0" fill="#b9c2c4"/><rect x="53" y="48" width="4" height="11" rx="2.0" fill="#b9c2c4"/><rect x="64" y="44" width="5" height="14" rx="2.5" fill="#8f9d9f"/><rect x="85" y="24" width="5" height="40" rx="2.5" fill="#8f9d9f"/><rect x="84" y="50" width="9" height="18" rx="4.5" fill="#8f9d9f"/><rect x="97" y="46" width="4" height="12" rx="2.0" fill="#b9c2c4"/><rect x="101" y="52" width="6" height="14" rx="3.0" fill="#b9c2c4"/><rect x="109" y="44" width="4" height="12" rx="2.0" fill="#b9c2c4"/><rect x="116" y="38" width="8" height="30" rx="4.0" fill="#5f9344"/><rect x="123" y="63" width="13" height="30" rx="6.5" fill="#b9c2c4"/><rect x="134" y="48" width="4" height="8" rx="2.0" fill="#8f9d9f"/><path d="M80 52 Q85 58 77 62 Q66 67 70 73 Q62 79 62 85 Q64 90 60 93" fill="none" stroke="#9cc6ee" stroke-width="2.600" stroke-linecap="round"/><path d="M66 76 Q60 82 61 93 L66 93 Q64 84 70 78z" fill="#9cc6ee"/><path d="M0 78 Q10 72 20 80 Q30 84 40 86 Q55 92 70 92 Q85 90 100 82 Q112 76 122 84 Q134 90 144 82 V108 H0z" fill="#3d7035"/><path d="M0 98 Q15 92 30 98 Q50 104 70 98 Q90 92 110 100 Q130 104 144 96 V108 H0z" fill="#275529"/><path d="M0 8 L0 18 L82 96 L70 96z" fill="#fff" opacity=".22"/><path d="M0 26 L0 36 L58 88 L68 88z" fill="#fff" opacity=".2"/></g><g clip-path="url(#R3)"><rect x="0" y="0" width="144" height="108" fill="#48688a"/><rect x="0" y="30" width="144" height="25" fill="#54728c"/><ellipse cx="34" cy="27" rx="13" ry="7" fill="#6c8298" transform="rotate(-24 34 27)"/><ellipse cx="27" cy="34" rx="9" ry="4" fill="#6c8298" transform="rotate(-24 27 34)"/><ellipse cx="40" cy="21" rx="7" ry="5" fill="#6c8298" transform="rotate(-24 40 21)"/><ellipse cx="60" cy="8" rx="14" ry="5" fill="#6c8298" transform="rotate(-24 60 8)"/><ellipse cx="54" cy="13" rx="8" ry="3" fill="#6c8298" transform="rotate(-24 54 13)"/><ellipse cx="77" cy="37" rx="8" ry="4" fill="#6c8298" transform="rotate(-24 77 37)"/><ellipse cx="96" cy="24" rx="13" ry="8" fill="#6c8298" transform="rotate(-24 96 24)"/><ellipse cx="88" cy="34" rx="11" ry="5" fill="#6c8298" transform="rotate(-24 88 34)"/><ellipse cx="108" cy="32" rx="14" ry="6" fill="#3f566c" transform="rotate(-24 108 32)"/><ellipse cx="118" cy="8" rx="7" ry="4" fill="#6c8298" transform="rotate(-24 118 8)"/><ellipse cx="125" cy="19" rx="9" ry="5" fill="#6c8298" transform="rotate(-24 125 19)"/><ellipse cx="130" cy="14" rx="6" ry="4" fill="#6c8298" transform="rotate(-24 130 14)"/><ellipse cx="135" cy="32" rx="3" ry="2" fill="#6c8298" transform="rotate(-24 135 32)"/><path d="M0 50 Q20 46 40 50 T80 50 T144 50 V70 H0z" fill="#4a6868"/><path d="M0 58 Q25 52 50 60 T100 58 T144 56 V80 H0z" fill="#3f5f5c"/><path d="M0 68 Q20 60 45 70 Q70 80 95 72 Q120 64 144 72 V95 H0z" fill="#335450"/><rect x="14" y="44" width="3.5" height="22" rx="1.8" fill="#2c3e3e"/><rect x="8" y="57" width="3" height="9" rx="1.5" fill="#2c3e3e"/><rect x="19" y="62" width="2.5" height="8" rx="1.2" fill="#243434"/><rect x="29" y="64" width="9" height="17" rx="4.5" fill="#2c3e3e"/><rect x="36" y="50" width="5" height="12" rx="2.5" fill="#2c3e3e"/><rect x="38" y="58" width="5" height="10" rx="2.5" fill="#2c3e3e"/><rect x="47" y="57" width="4" height="10" rx="2.0" fill="#2c3e3e"/><rect x="53" y="48" width="4" height="11" rx="2.0" fill="#2c3e3e"/><rect x="64" y="44" width="5" height="14" rx="2.5" fill="#243434"/><rect x="85" y="24" width="5" height="40" rx="2.5" fill="#243434"/><rect x="84" y="50" width="9" height="18" rx="4.5" fill="#243434"/><rect x="97" y="46" width="4" height="12" rx="2.0" fill="#2c3e3e"/><rect x="101" y="52" width="6" height="14" rx="3.0" fill="#2c3e3e"/><rect x="109" y="44" width="4" height="12" rx="2.0" fill="#2c3e3e"/><rect x="116" y="38" width="8" height="30" rx="4.0" fill="#2c3e3e"/><rect x="123" y="63" width="13" height="30" rx="6.5" fill="#2c3e3e"/><rect x="134" y="48" width="4" height="8" rx="2.0" fill="#243434"/><path d="M80 52 Q85 58 77 62 Q66 67 70 73 Q62 79 62 85 Q64 90 60 93" fill="none" stroke="#5a86b4" stroke-width="2.600" stroke-linecap="round"/><path d="M66 76 Q60 82 61 93 L66 93 Q64 84 70 78z" fill="#5a86b4"/><path d="M0 78 Q10 72 20 80 Q30 84 40 86 Q55 92 70 92 Q85 90 100 82 Q112 76 122 84 Q134 90 144 82 V108 H0z" fill="#26444c"/><path d="M0 98 Q15 92 30 98 Q50 104 70 98 Q90 92 110 100 Q130 104 144 96 V108 H0z" fill="#1c3446"/><rect x="117.6" y="37.6" width=".8" height=".8" fill="#b9d0e8" opacity=".8"/><rect x="129.7" y="47.2" width=".8" height=".8" fill="#b9d0e8" opacity=".8"/><rect x="125.8" y="46.3" width=".8" height=".8" fill="#b9d0e8" opacity=".8"/><rect x="76.0" y="24.3" width=".8" height=".8" fill="#b9d0e8" opacity=".8"/><rect x="140.0" y="33.2" width=".8" height=".8" fill="#b9d0e8" opacity=".8"/><rect x="137.1" y="7.4" width=".8" height=".8" fill="#b9d0e8" opacity=".8"/><rect x="106.8" y="13.8" width=".8" height=".8" fill="#b9d0e8" opacity=".8"/><rect x="112.1" y="29.5" width=".8" height=".8" fill="#b9d0e8" opacity=".8"/><rect x="74.9" y="12.4" width=".8" height=".8" fill="#b9d0e8" opacity=".8"/><rect x="93.6" y="46.0" width=".8" height=".8" fill="#b9d0e8" opacity=".8"/><rect x="127.6" y="9.7" width=".8" height=".8" fill="#b9d0e8" opacity=".8"/><rect x="129.8" y="8.7" width=".8" height=".8" fill="#b9d0e8" opacity=".8"/><rect x="117.2" y="8.1" width=".8" height=".8" fill="#b9d0e8" opacity=".8"/><rect x="74.1" y="43.8" width=".8" height=".8" fill="#b9d0e8" opacity=".8"/><rect x="88.7" y="12.3" width=".8" height=".8" fill="#b9d0e8" opacity=".8"/><rect x="142.8" y="43.9" width=".8" height=".8" fill="#b9d0e8" opacity=".8"/><rect x="94.3" y="48.2" width=".8" height=".8" fill="#b9d0e8" opacity=".8"/><rect x="111.7" y="34.5" width=".8" height=".8" fill="#b9d0e8" opacity=".8"/><rect x="88.3" y="47.2" width=".8" height=".8" fill="#b9d0e8" opacity=".8"/><rect x="122.3" y="48.4" width=".8" height=".8" fill="#b9d0e8" opacity=".8"/><rect x="136.6" y="16.3" width=".8" height=".8" fill="#b9d0e8" opacity=".8"/><rect x="99.3" y="10.0" width=".8" height=".8" fill="#b9d0e8" opacity=".8"/><rect x="87" y="58" width="1.600" height="3" rx=".8" fill="#c8d4d8"/><rect x="87" y="64" width="1.600" height="3" rx=".8" fill="#c8d4d8"/><rect x="104" y="56" width="1.600" height="3" rx=".8" fill="#c8d4d8"/><rect x="119" y="49" width="1.600" height="3" rx=".8" fill="#c8d4d8"/><rect x="119" y="58" width="1.600" height="3" rx=".8" fill="#c8d4d8"/><rect x="119" y="65" width="1.600" height="3" rx=".8" fill="#c8d4d8"/><rect x="128" y="70" width="1.600" height="3" rx=".8" fill="#c8d4d8"/><rect x="130" y="84" width="1.600" height="3" rx=".8" fill="#c8d4d8"/><rect x="131" y="92" width="1.600" height="3" rx=".8" fill="#c8d4d8"/></g></svg>
<svg class="th" style="left:594px;top:512px" width="144" height="108" viewBox="0 0 144 108"><g><rect x="0" y="0" width="144" height="108" fill="#a4c9e2"/><rect x="0" y="30" width="144" height="25" fill="#b9d8e6"/><ellipse cx="34" cy="27" rx="13" ry="7" fill="#ece6cf" transform="rotate(-24 34 27)"/><ellipse cx="27" cy="34" rx="9" ry="4" fill="#ece6cf" transform="rotate(-24 27 34)"/><ellipse cx="40" cy="21" rx="7" ry="5" fill="#ece6cf" transform="rotate(-24 40 21)"/><ellipse cx="60" cy="8" rx="14" ry="5" fill="#ece6cf" transform="rotate(-24 60 8)"/><ellipse cx="54" cy="13" rx="8" ry="3" fill="#ece6cf" transform="rotate(-24 54 13)"/><ellipse cx="77" cy="37" rx="8" ry="4" fill="#ece6cf" transform="rotate(-24 77 37)"/><ellipse cx="96" cy="24" rx="13" ry="8" fill="#ece6cf" transform="rotate(-24 96 24)"/><ellipse cx="88" cy="34" rx="11" ry="5" fill="#ece6cf" transform="rotate(-24 88 34)"/><ellipse cx="108" cy="32" rx="14" ry="6" fill="#c9cfd0" transform="rotate(-24 108 32)"/><ellipse cx="118" cy="8" rx="7" ry="4" fill="#ece6cf" transform="rotate(-24 118 8)"/><ellipse cx="125" cy="19" rx="9" ry="5" fill="#ece6cf" transform="rotate(-24 125 19)"/><ellipse cx="130" cy="14" rx="6" ry="4" fill="#ece6cf" transform="rotate(-24 130 14)"/><ellipse cx="135" cy="32" rx="3" ry="2" fill="#ece6cf" transform="rotate(-24 135 32)"/><path d="M0 50 Q20 46 40 50 T80 50 T144 50 V70 H0z" fill="#b7c992"/><path d="M0 58 Q25 52 50 60 T100 58 T144 56 V80 H0z" fill="#96b66a"/><path d="M0 68 Q20 60 45 70 Q70 80 95 72 Q120 64 144 72 V95 H0z" fill="#6c9c48"/><rect x="14" y="44" width="3.5" height="22" rx="1.8" fill="#b9c2c4"/><rect x="8" y="57" width="3" height="9" rx="1.5" fill="#b9c2c4"/><rect x="19" y="62" width="2.5" height="8" rx="1.2" fill="#8f9d9f"/><rect x="29" y="64" width="9" height="17" rx="4.5" fill="#b9c2c4"/><rect x="36" y="50" width="5" height="12" rx="2.5" fill="#b9c2c4"/><rect x="38" y="58" width="5" height="10" rx="2.5" fill="#b9c2c4"/><rect x="47" y="57" width="4" height="10" rx="2.0" fill="#b9c2c4"/><rect x="53" y="48" width="4" height="11" rx="2.0" fill="#b9c2c4"/><rect x="64" y="44" width="5" height="14" rx="2.5" fill="#8f9d9f"/><rect x="85" y="24" width="5" height="40" rx="2.5" fill="#8f9d9f"/><rect x="84" y="50" width="9" height="18" rx="4.5" fill="#8f9d9f"/><rect x="97" y="46" width="4" height="12" rx="2.0" fill="#b9c2c4"/><rect x="101" y="52" width="6" height="14" rx="3.0" fill="#b9c2c4"/><rect x="109" y="44" width="4" height="12" rx="2.0" fill="#b9c2c4"/><rect x="116" y="38" width="8" height="30" rx="4.0" fill="#5f9344"/><rect x="123" y="63" width="13" height="30" rx="6.5" fill="#b9c2c4"/><rect x="134" y="48" width="4" height="8" rx="2.0" fill="#8f9d9f"/><path d="M80 52 Q85 58 77 62 Q66 67 70 73 Q62 79 62 85 Q64 90 60 93" fill="none" stroke="#9cc6ee" stroke-width="2.600" stroke-linecap="round"/><path d="M66 76 Q60 82 61 93 L66 93 Q64 84 70 78z" fill="#9cc6ee"/><path d="M0 78 Q10 72 20 80 Q30 84 40 86 Q55 92 70 92 Q85 90 100 82 Q112 76 122 84 Q134 90 144 82 V108 H0z" fill="#3d7035"/><path d="M0 98 Q15 92 30 98 Q50 104 70 98 Q90 92 110 100 Q130 104 144 96 V108 H0z" fill="#275529"/><path d="M0 8 L0 18 L82 96 L70 96z" fill="#fff" opacity=".22"/><path d="M0 26 L0 36 L58 88 L68 88z" fill="#fff" opacity=".2"/></g><rect x="128" y="70" width="1.600" height="3" rx=".8" fill="#fff"/><rect x="130" y="84" width="1.600" height="3" rx=".8" fill="#fff"/><rect x="131" y="92" width="1.600" height="3" rx=".8" fill="#fff"/><rect x="119" y="49" width="1.600" height="3" rx=".8" fill="#fff"/><rect x="119" y="58" width="1.600" height="3" rx=".8" fill="#fff"/><rect x="119" y="65" width="1.600" height="3" rx=".8" fill="#fff"/><rect x="31" y="72" width="1.600" height="3" rx=".8" fill="#fff"/><rect x="33" y="78" width="1.600" height="3" rx=".8" fill="#fff"/><g transform="translate(7.500,83.500)"><circle cx="8" cy="8" r="6.600" fill="none" stroke="#fff" stroke-width="1.500"/><path d="M5.800 6.800 L8 8.800 L11 5.800" fill="none" stroke="#fff" stroke-width="1.300" stroke-linecap="round" stroke-linejoin="round"/></g></svg>
<svg class="th" style="left:756px;top:512px" width="144" height="108" viewBox="0 0 144 108"><defs><clipPath id="L5"><rect x="0" y="0" width="72" height="108"/></clipPath><clipPath id="R5"><rect x="72" y="0" width="72" height="108"/></clipPath>
<linearGradient id="a5" x1="0" y1="0" x2="0" y2="1"><stop offset="0" stop-color="#78909e"/><stop offset=".4" stop-color="#6a8aa6"/><stop offset=".6" stop-color="#4a74a6"/><stop offset="1" stop-color="#3a6498"/></linearGradient>
<linearGradient id="b5" x1="0" y1="0" x2=".4" y2="1"><stop offset="0" stop-color="#3d4a57"/><stop offset=".4" stop-color="#30485e"/><stop offset="1" stop-color="#1f4872"/></linearGradient>
<filter id="f5"><feGaussianBlur stdDeviation="1"/></filter></defs>
<g clip-path="url(#L5)"><rect width="72" height="108" fill="url(#a5)"/><g filter="url(#f5)" fill="none">
<path d="M-5 28 Q30 10 60 45" stroke="#5a9bb0" stroke-width="3" opacity=".8"/>
<path d="M10 0 Q45 10 66 44" stroke="#5a98b0" stroke-width="4" opacity=".7"/>
<path d="M0 38 L30 30 L14 48z" fill="#c4a89a" opacity=".8"/>
<path d="M0 46 Q30 40 40 60" stroke="#8ab0c8" stroke-width="3" opacity=".7"/>
<path d="M0 52 L26 62 M0 60 L30 72 M0 68 L34 80 M6 90 L40 96 M0 100 L30 88" stroke="#3a5e98" stroke-width="3" opacity=".8"/>
<path d="M20 50 L50 46 L40 60z" fill="#4a72a8" opacity=".8"/>
<path d="M34 64 Q55 60 72 70" stroke="#8db2cc" stroke-width="2.500" opacity=".7"/>
<path d="M30 78 L72 74 L72 86 L40 88z" fill="#4670a8" opacity=".7"/>
<path d="M0 96 L20 106 M30 100 L56 108" stroke="#2a466e" stroke-width="3" opacity=".8"/>
<path d="M44 102 L60 96 L70 104" stroke="#90b0cc" stroke-width="2" opacity=".6"/>
</g></g>
<g clip-path="url(#R5)"><rect x="72" width="72" height="108" fill="url(#b5)"/><g filter="url(#f5)" fill="none">
<path d="M72 58 L92 57" stroke="#8a7870" stroke-width="3" opacity=".6"/>
<path d="M88 66 L130 78 M84 74 L124 90 M80 82 L110 100 M76 92 L100 104" stroke="#1a3450" stroke-width="2.500" opacity=".8"/>
<path d="M72 20 L110 50" stroke="#485868" stroke-width="3" opacity=".4"/>
<path d="M100 40 L144 30 L144 60z" fill="#204670" opacity=".5"/>
<path d="M78 98 L96 102" stroke="#a08070" stroke-width="1.500" opacity=".6"/>
</g></g></svg>
<svg class="th" style="left:432px;top:638px" width="144" height="108" viewBox="0 0 144 108"><defs><clipPath id="L6"><rect x="0" y="0" width="72" height="108"/></clipPath><clipPath id="R6"><rect x="72" y="0" width="72" height="108"/></clipPath>
<linearGradient id="a6" x1="0" y1="0" x2="1" y2="0"><stop offset="0" stop-color="#a5ac70"/><stop offset=".55" stop-color="#b4b783"/><stop offset=".8" stop-color="#c0c08e"/><stop offset="1" stop-color="#b1b57c"/></linearGradient>
<linearGradient id="b6" x1="0" y1="0" x2="0" y2="1"><stop offset="0" stop-color="#323f12"/><stop offset=".4" stop-color="#44541f"/><stop offset="1" stop-color="#566838"/></linearGradient>
<filter id="f6"><feGaussianBlur stdDeviation=".9"/></filter></defs>
<g clip-path="url(#L6)"><rect width="72" height="108" fill="url(#a6)"/><g filter="url(#f6)">
<path d="M0 0 L20 0 L10 40 L0 50z" fill="#9ba55e" opacity=".8"/>
<path d="M13 8 L30 4 L28 36 L14 32z" fill="#b7b894" opacity=".7"/>
<path d="M0 74 L30 70 L40 84 L30 108 L0 108z" fill="#4b9a26"/>
<path d="M0 52 L44 28 L44 33 L0 62z" fill="#8aa860" opacity=".8"/>
<path d="M14 82 L40 38 L44 40 L20 86z" fill="#93ae68" opacity=".7"/>
<path d="M30 92 L60 60 L72 64 L72 108 L40 108z" fill="#b2b884" opacity=".8"/>
<path d="M50 0 L60 0 L62 108 L52 108z" fill="#c6c596" opacity=".7"/>
<path d="M4 100 L36 96 M16 92 L38 92 M30 84 L42 88 M2 106 L34 102" stroke="#dcdcc4" stroke-width="2" fill="none"/>
<path d="M44 104 L60 84 L66 90 L52 108z" fill="#5fa030" opacity=".8"/>
</g></g>
<g clip-path="url(#R6)"><rect x="72" width="72" height="108" fill="url(#b6)"/><g filter="url(#f6)">
<path d="M72 0 L144 0 L144 26 L100 30z" fill="#3b4a17" opacity=".9"/>
<path d="M100 30 L144 26 L144 50 L108 44z" fill="#7a8650" opacity=".8"/>
<path d="M112 48 L144 36 L144 58 L116 56z" fill="#3f6a20" opacity=".8"/>
<path d="M82 34 L96 38 L110 58 L96 58z" fill="#7a5a2a" opacity=".8"/>
<path d="M72 40 L90 52 L144 96 L144 108 L120 108 L72 60z" fill="#5f6d3e" opacity=".9"/>
<path d="M108 50 L144 54 M106 58 L144 64 M98 64 L144 76 M88 66 L144 92" stroke="#a9b28a" stroke-width="1.500" fill="none" opacity=".9"/>
<path d="M76 92 L96 84 L112 108 L84 108z" fill="#a7ab86" opacity=".7"/>
<path d="M72 20 L84 40 L78 60 L72 62z" fill="#232c0c" opacity=".8"/>
</g></g></svg>
<svg class="th" style="left:594px;top:638px" width="144" height="108" viewBox="0 0 144 108"><defs><clipPath id="L7"><rect x="0" y="0" width="72" height="108"/></clipPath><clipPath id="R7"><rect x="72" y="0" width="72" height="108"/></clipPath>
<linearGradient id="a7" x1="0" y1="0" x2="1" y2="1"><stop offset="0" stop-color="#d3d8e6"/><stop offset=".5" stop-color="#c5cde0"/><stop offset="1" stop-color="#a3b1cc"/></linearGradient>
<linearGradient id="b7" x1="0" y1="0" x2=".3" y2="1"><stop offset="0" stop-color="#545d78"/><stop offset=".5" stop-color="#465170"/><stop offset="1" stop-color="#3a4866"/></linearGradient>
<filter id="f7"><feGaussianBlur stdDeviation="1.200"/></filter></defs>
<g clip-path="url(#L7)"><rect width="72" height="108" fill="url(#a7)"/><g filter="url(#f7)" fill="none">
<path d="M0 10 L60 108 M10 0 L72 90 M0 40 L40 108" stroke="#e6eaf3" stroke-width="6" opacity=".55"/>
<path d="M30 0 L72 60 M0 70 L24 108" stroke="#b3bfd6" stroke-width="5" opacity=".4"/>
<path d="M64 20 L72 30 L66 22" stroke="#fff" stroke-width="1.500"/>
<path d="M48 68 L58 74 L56 84" stroke="#eef1f8" stroke-width="1.500"/>
</g></g>
<g clip-path="url(#R7)"><rect x="72" width="72" height="108" fill="url(#b7)"/><g filter="url(#f7)" fill="none">
<path d="M92 0 L88 108" stroke="#5f6a86" stroke-width="5" opacity=".6"/>
<path d="M116 0 L112 108" stroke="#3a4562" stroke-width="6" opacity=".6"/>
<path d="M80 40 L90 39" stroke="#b9c2d6" stroke-width="1.200"/>
<path d="M100 10 L130 0 M76 90 L100 84" stroke="#66708c" stroke-width="1.500" opacity=".7"/>
</g></g></svg>
<svg class="th" style="left:756px;top:638px" width="144" height="108" viewBox="0 0 144 108"><defs><clipPath id="L8"><rect x="0" y="0" width="72" height="108"/></clipPath><clipPath id="R8"><rect x="72" y="0" width="72" height="108"/></clipPath>
<linearGradient id="a8" x1="0" y1="0" x2="0" y2="1"><stop offset="0" stop-color="#ffc400"/><stop offset=".4" stop-color="#ffc800"/><stop offset=".62" stop-color="#f5a000"/><stop offset=".8" stop-color="#dc7800"/><stop offset="1" stop-color="#c25600"/></linearGradient>
<linearGradient id="b8" x1="0" y1="0" x2="1" y2="1"><stop offset="0" stop-color="#2a98ee"/><stop offset=".4" stop-color="#1c78d8"/><stop offset=".75" stop-color="#0e4cac"/><stop offset="1" stop-color="#062c84"/></linearGradient>
<pattern id="p8" width="3" height="3" patternUnits="userSpaceOnUse"><path fill-rule="evenodd" d="M0 0h3v3H0zM1.500 .25a1.250 1.250 0 1 0 0 2.500a1.250 1.250 0 1 0 0-2.500z" fill="#000" opacity=".2"/><circle cx="1.500" cy="1.500" r=".8" fill="#fff" opacity=".18"/></pattern>
</defs>
<g clip-path="url(#L8)"><rect width="72" height="108" fill="url(#a8)"/><rect x="6" y="0" width="3" height="3" fill="#b04800" opacity="0.60"/><rect x="9" y="0" width="3" height="3" fill="#b04800" opacity="0.48"/><rect x="15" y="0" width="3" height="3" fill="#b04800" opacity="0.49"/><rect x="21" y="0" width="3" height="3" fill="#b04800" opacity="0.43"/><rect x="33" y="0" width="3" height="3" fill="#b04800" opacity="0.38"/><rect x="36" y="0" width="3" height="3" fill="#b04800" opacity="0.48"/><rect x="54" y="0" width="3" height="3" fill="#b04800" opacity="0.40"/><rect x="66" y="0" width="3" height="3" fill="#b04800" opacity="0.39"/><rect x="69" y="0" width="3" height="3" fill="#b04800" opacity="0.40"/><rect x="3" y="3" width="3" height="3" fill="#b04800" opacity="0.61"/><rect x="9" y="3" width="3" height="3" fill="#b04800" opacity="0.43"/><rect x="15" y="3" width="3" height="3" fill="#b04800" opacity="0.45"/><rect x="21" y="3" width="3" height="3" fill="#b04800" opacity="0.51"/><rect x="24" y="3" width="3" height="3" fill="#b04800" opacity="0.50"/><rect x="30" y="3" width="3" height="3" fill="#b04800" opacity="0.30"/><rect x="33" y="3" width="3" height="3" fill="#b04800" opacity="0.49"/><rect x="36" y="3" width="3" height="3" fill="#b04800" opacity="0.33"/><rect x="54" y="3" width="3" height="3" fill="#b04800" opacity="0.50"/><rect x="57" y="3" width="3" height="3" fill="#b04800" opacity="0.51"/><rect x="63" y="3" width="3" height="3" fill="#b04800" opacity="0.49"/><rect x="69" y="3" width="3" height="3" fill="#b04800" opacity="0.39"/><rect x="6" y="6" width="3" height="3" fill="#b04800" opacity="0.55"/><rect x="12" y="6" width="3" height="3" fill="#fff46a" opacity="0.53"/><rect x="15" y="6" width="3" height="3" fill="#b04800" opacity="0.43"/><rect x="27" y="6" width="3" height="3" fill="#b04800" opacity="0.42"/><rect x="48" y="6" width="3" height="3" fill="#b04800" opacity="0.58"/><rect x="57" y="6" width="3" height="3" fill="#b04800" opacity="0.46"/><rect x="63" y="6" width="3" height="3" fill="#b04800" opacity="0.52"/><rect x="66" y="6" width="3" height="3" fill="#b04800" opacity="0.57"/><rect x="69" y="6" width="3" height="3" fill="#b04800" opacity="0.57"/><rect x="9" y="9" width="3" height="3" fill="#fff46a" opacity="0.57"/><rect x="15" y="9" width="3" height="3" fill="#fff46a" opacity="0.64"/><rect x="33" y="9" width="3" height="3" fill="#b04800" opacity="0.60"/><rect x="36" y="9" width="3" height="3" fill="#fff46a" opacity="0.37"/><rect x="42" y="9" width="3" height="3" fill="#b04800" opacity="0.63"/><rect x="51" y="9" width="3" height="3" fill="#b04800" opacity="0.32"/><rect x="54" y="9" width="3" height="3" fill="#b04800" opacity="0.44"/><rect x="66" y="9" width="3" height="3" fill="#b04800" opacity="0.50"/><rect x="69" y="9" width="3" height="3" fill="#b04800" opacity="0.33"/><rect x="6" y="12" width="3" height="3" fill="#b04800" opacity="0.46"/><rect x="21" y="12" width="3" height="3" fill="#b04800" opacity="0.55"/><rect x="33" y="12" width="3" height="3" fill="#b04800" opacity="0.32"/><rect x="39" y="12" width="3" height="3" fill="#b04800" opacity="0.52"/><rect x="42" y="12" width="3" height="3" fill="#b04800" opacity="0.57"/><rect x="45" y="12" width="3" height="3" fill="#fff46a" opacity="0.35"/><rect x="48" y="12" width="3" height="3" fill="#b04800" opacity="0.46"/><rect x="57" y="12" width="3" height="3" fill="#b04800" opacity="0.47"/><rect x="69" y="12" width="3" height="3" fill="#b04800" opacity="0.65"/><rect x="15" y="15" width="3" height="3" fill="#b04800" opacity="0.52"/><rect x="21" y="15" width="3" height="3" fill="#fff46a" opacity="0.57"/><rect x="27" y="15" width="3" height="3" fill="#b04800" opacity="0.54"/><rect x="39" y="15" width="3" height="3" fill="#b04800" opacity="0.51"/><rect x="48" y="15" width="3" height="3" fill="#fff46a" opacity="0.60"/><rect x="60" y="15" width="3" height="3" fill="#b04800" opacity="0.51"/><rect x="0" y="18" width="3" height="3" fill="#b04800" opacity="0.37"/><rect x="6" y="18" width="3" height="3" fill="#b04800" opacity="0.32"/><rect x="18" y="18" width="3" height="3" fill="#b04800" opacity="0.57"/><rect x="27" y="18" width="3" height="3" fill="#b04800" opacity="0.63"/><rect x="42" y="18" width="3" height="3" fill="#b04800" opacity="0.42"/><rect x="45" y="18" width="3" height="3" fill="#fff46a" opacity="0.58"/><rect x="48" y="18" width="3" height="3" fill="#b04800" opacity="0.38"/><rect x="51" y="18" width="3" height="3" fill="#b04800" opacity="0.34"/><rect x="6" y="21" width="3" height="3" fill="#fff46a" opacity="0.43"/><rect x="12" y="21" width="3" height="3" fill="#b04800" opacity="0.45"/><rect x="18" y="21" width="3" height="3" fill="#b04800" opacity="0.34"/><rect x="24" y="21" width="3" height="3" fill="#b04800" opacity="0.39"/><rect x="33" y="21" width="3" height="3" fill="#fff46a" opacity="0.37"/><rect x="36" y="21" width="3" height="3" fill="#fff46a" opacity="0.44"/><rect x="63" y="21" width="3" height="3" fill="#b04800" opacity="0.41"/><rect x="66" y="21" width="3" height="3" fill="#fff46a" opacity="0.53"/><rect x="9" y="24" width="3" height="3" fill="#b04800" opacity="0.40"/><rect x="24" y="24" width="3" height="3" fill="#b04800" opacity="0.44"/><rect x="30" y="24" width="3" height="3" fill="#b04800" opacity="0.49"/><rect x="33" y="24" width="3" height="3" fill="#b04800" opacity="0.55"/><rect x="39" y="24" width="3" height="3" fill="#b04800" opacity="0.52"/><rect x="60" y="24" width="3" height="3" fill="#b04800" opacity="0.49"/><rect x="66" y="24" width="3" height="3" fill="#b04800" opacity="0.49"/><rect x="12" y="27" width="3" height="3" fill="#b04800" opacity="0.55"/><rect x="15" y="27" width="3" height="3" fill="#fff46a" opacity="0.51"/><rect x="18" y="27" width="3" height="3" fill="#b04800" opacity="0.30"/><rect x="24" y="27" width="3" height="3" fill="#b04800" opacity="0.35"/><rect x="27" y="27" width="3" height="3" fill="#b04800" opacity="0.33"/><rect x="48" y="27" width="3" height="3" fill="#b04800" opacity="0.54"/><rect x="54" y="27" width="3" height="3" fill="#fff46a" opacity="0.45"/><rect x="60" y="27" width="3" height="3" fill="#b04800" opacity="0.51"/><rect x="69" y="27" width="3" height="3" fill="#b04800" opacity="0.54"/><rect x="0" y="30" width="3" height="3" fill="#b04800" opacity="0.47"/><rect x="15" y="30" width="3" height="3" fill="#fff46a" opacity="0.39"/><rect x="24" y="30" width="3" height="3" fill="#fff46a" opacity="0.45"/><rect x="42" y="30" width="3" height="3" fill="#b04800" opacity="0.37"/><rect x="51" y="30" width="3" height="3" fill="#b04800" opacity="0.35"/><rect x="54" y="30" width="3" height="3" fill="#b04800" opacity="0.49"/><rect x="60" y="30" width="3" height="3" fill="#b04800" opacity="0.37"/><rect x="12" y="33" width="3" height="3" fill="#b04800" opacity="0.58"/><rect x="36" y="33" width="3" height="3" fill="#b04800" opacity="0.42"/><rect x="48" y="33" width="3" height="3" fill="#b04800" opacity="0.49"/><rect x="63" y="33" width="3" height="3" fill="#b04800" opacity="0.32"/><rect x="0" y="36" width="3" height="3" fill="#b04800" opacity="0.59"/><rect x="3" y="36" width="3" height="3" fill="#fff46a" opacity="0.39"/><rect x="6" y="36" width="3" height="3" fill="#fff46a" opacity="0.36"/><rect x="21" y="36" width="3" height="3" fill="#b04800" opacity="0.36"/><rect x="24" y="36" width="3" height="3" fill="#b04800" opacity="0.50"/><rect x="27" y="36" width="3" height="3" fill="#b04800" opacity="0.53"/><rect x="45" y="36" width="3" height="3" fill="#b04800" opacity="0.43"/><rect x="54" y="36" width="3" height="3" fill="#fff46a" opacity="0.49"/><rect x="57" y="36" width="3" height="3" fill="#b04800" opacity="0.60"/><rect x="63" y="36" width="3" height="3" fill="#b04800" opacity="0.64"/><rect x="69" y="36" width="3" height="3" fill="#fff46a" opacity="0.53"/><rect x="6" y="39" width="3" height="3" fill="#b04800" opacity="0.37"/><rect x="9" y="39" width="3" height="3" fill="#b04800" opacity="0.49"/><rect x="12" y="39" width="3" height="3" fill="#fff46a" opacity="0.61"/><rect x="15" y="39" width="3" height="3" fill="#b04800" opacity="0.31"/><rect x="21" y="39" width="3" height="3" fill="#b04800" opacity="0.41"/><rect x="24" y="39" width="3" height="3" fill="#fff46a" opacity="0.40"/><rect x="48" y="39" width="3" height="3" fill="#b04800" opacity="0.56"/><rect x="51" y="39" width="3" height="3" fill="#b04800" opacity="0.32"/><rect x="54" y="39" width="3" height="3" fill="#b04800" opacity="0.59"/><rect x="69" y="39" width="3" height="3" fill="#b04800" opacity="0.55"/><rect x="6" y="42" width="3" height="3" fill="#b04800" opacity="0.50"/><rect x="33" y="42" width="3" height="3" fill="#b04800" opacity="0.64"/><rect x="36" y="42" width="3" height="3" fill="#fff46a" opacity="0.49"/><rect x="39" y="42" width="3" height="3" fill="#fff46a" opacity="0.59"/><rect x="48" y="42" width="3" height="3" fill="#b04800" opacity="0.61"/><rect x="57" y="42" width="3" height="3" fill="#fff46a" opacity="0.43"/><rect x="63" y="42" width="3" height="3" fill="#b04800" opacity="0.63"/><rect x="0" y="45" width="3" height="3" fill="#b04800" opacity="0.53"/><rect x="12" y="45" width="3" height="3" fill="#b04800" opacity="0.45"/><rect x="30" y="45" width="3" height="3" fill="#b04800" opacity="0.31"/><rect x="33" y="45" width="3" height="3" fill="#fff46a" opacity="0.35"/><rect x="36" y="45" width="3" height="3" fill="#b04800" opacity="0.50"/><rect x="39" y="45" width="3" height="3" fill="#b04800" opacity="0.51"/><rect x="45" y="45" width="3" height="3" fill="#fff46a" opacity="0.64"/><rect x="48" y="45" width="3" height="3" fill="#b04800" opacity="0.61"/><rect x="57" y="45" width="3" height="3" fill="#b04800" opacity="0.56"/><rect x="63" y="45" width="3" height="3" fill="#b04800" opacity="0.47"/><rect x="6" y="48" width="3" height="3" fill="#fff46a" opacity="0.55"/><rect x="24" y="48" width="3" height="3" fill="#b04800" opacity="0.44"/><rect x="33" y="48" width="3" height="3" fill="#b04800" opacity="0.47"/><rect x="42" y="48" width="3" height="3" fill="#b04800" opacity="0.53"/><rect x="57" y="48" width="3" height="3" fill="#b04800" opacity="0.40"/><rect x="63" y="48" width="3" height="3" fill="#b04800" opacity="0.64"/><rect x="0" y="51" width="3" height="3" fill="#b04800" opacity="0.30"/><rect x="24" y="51" width="3" height="3" fill="#b04800" opacity="0.64"/><rect x="30" y="51" width="3" height="3" fill="#fff46a" opacity="0.49"/><rect x="48" y="51" width="3" height="3" fill="#fff46a" opacity="0.59"/><rect x="57" y="51" width="3" height="3" fill="#b04800" opacity="0.44"/><rect x="69" y="51" width="3" height="3" fill="#b04800" opacity="0.37"/><rect x="9" y="54" width="3" height="3" fill="#b04800" opacity="0.57"/><rect x="15" y="54" width="3" height="3" fill="#fff46a" opacity="0.49"/><rect x="18" y="54" width="3" height="3" fill="#fff46a" opacity="0.37"/><rect x="24" y="54" width="3" height="3" fill="#b04800" opacity="0.33"/><rect x="30" y="54" width="3" height="3" fill="#b04800" opacity="0.57"/><rect x="36" y="54" width="3" height="3" fill="#fff46a" opacity="0.46"/><rect x="39" y="54" width="3" height="3" fill="#fff46a" opacity="0.56"/><rect x="60" y="54" width="3" height="3" fill="#fff46a" opacity="0.42"/><rect x="66" y="54" width="3" height="3" fill="#fff46a" opacity="0.65"/><rect x="0" y="57" width="3" height="3" fill="#b04800" opacity="0.31"/><rect x="6" y="57" width="3" height="3" fill="#b04800" opacity="0.47"/><rect x="24" y="57" width="3" height="3" fill="#b04800" opacity="0.42"/><rect x="36" y="57" width="3" height="3" fill="#b04800" opacity="0.33"/><rect x="48" y="57" width="3" height="3" fill="#fff46a" opacity="0.48"/><rect x="60" y="57" width="3" height="3" fill="#fff46a" opacity="0.52"/><rect x="63" y="57" width="3" height="3" fill="#b04800" opacity="0.32"/><rect x="69" y="57" width="3" height="3" fill="#fff46a" opacity="0.40"/><rect x="3" y="60" width="3" height="3" fill="#b04800" opacity="0.38"/><rect x="6" y="60" width="3" height="3" fill="#b04800" opacity="0.61"/><rect x="12" y="60" width="3" height="3" fill="#b04800" opacity="0.33"/><rect x="18" y="60" width="3" height="3" fill="#b04800" opacity="0.55"/><rect x="33" y="60" width="3" height="3" fill="#fff46a" opacity="0.54"/><rect x="36" y="60" width="3" height="3" fill="#b04800" opacity="0.47"/><rect x="39" y="60" width="3" height="3" fill="#fff46a" opacity="0.46"/><rect x="54" y="60" width="3" height="3" fill="#b04800" opacity="0.57"/><rect x="0" y="63" width="3" height="3" fill="#fff46a" opacity="0.40"/><rect x="6" y="63" width="3" height="3" fill="#b04800" opacity="0.38"/><rect x="9" y="63" width="3" height="3" fill="#b04800" opacity="0.30"/><rect x="15" y="63" width="3" height="3" fill="#b04800" opacity="0.47"/><rect x="24" y="63" width="3" height="3" fill="#b04800" opacity="0.55"/><rect x="27" y="63" width="3" height="3" fill="#b04800" opacity="0.58"/><rect x="42" y="63" width="3" height="3" fill="#b04800" opacity="0.61"/><rect x="45" y="63" width="3" height="3" fill="#b04800" opacity="0.33"/><rect x="48" y="63" width="3" height="3" fill="#b04800" opacity="0.31"/><rect x="54" y="63" width="3" height="3" fill="#b04800" opacity="0.50"/><rect x="57" y="63" width="3" height="3" fill="#fff46a" opacity="0.46"/><rect x="66" y="63" width="3" height="3" fill="#fff46a" opacity="0.57"/><rect x="69" y="63" width="3" height="3" fill="#b04800" opacity="0.31"/><rect x="21" y="66" width="3" height="3" fill="#b04800" opacity="0.50"/><rect x="33" y="66" width="3" height="3" fill="#b04800" opacity="0.37"/><rect x="36" y="66" width="3" height="3" fill="#b04800" opacity="0.56"/><rect x="45" y="66" width="3" height="3" fill="#fff46a" opacity="0.57"/><rect x="54" y="66" width="3" height="3" fill="#b04800" opacity="0.65"/><rect x="63" y="66" width="3" height="3" fill="#b04800" opacity="0.46"/><rect x="12" y="69" width="3" height="3" fill="#b04800" opacity="0.59"/><rect x="15" y="69" width="3" height="3" fill="#b04800" opacity="0.39"/><rect x="21" y="69" width="3" height="3" fill="#b04800" opacity="0.40"/><rect x="33" y="69" width="3" height="3" fill="#b04800" opacity="0.52"/><rect x="42" y="69" width="3" height="3" fill="#fff46a" opacity="0.40"/><rect x="45" y="69" width="3" height="3" fill="#b04800" opacity="0.32"/><rect x="48" y="69" width="3" height="3" fill="#b04800" opacity="0.55"/><rect x="54" y="69" width="3" height="3" fill="#b04800" opacity="0.63"/><rect x="3" y="72" width="3" height="3" fill="#b04800" opacity="0.56"/><rect x="9" y="72" width="3" height="3" fill="#b04800" opacity="0.32"/><rect x="12" y="72" width="3" height="3" fill="#fff46a" opacity="0.42"/><rect x="15" y="72" width="3" height="3" fill="#fff46a" opacity="0.62"/><rect x="21" y="72" width="3" height="3" fill="#b04800" opacity="0.34"/><rect x="24" y="72" width="3" height="3" fill="#b04800" opacity="0.44"/><rect x="30" y="72" width="3" height="3" fill="#b04800" opacity="0.48"/><rect x="36" y="72" width="3" height="3" fill="#b04800" opacity="0.47"/><rect x="39" y="72" width="3" height="3" fill="#b04800" opacity="0.36"/><rect x="0" y="75" width="3" height="3" fill="#b04800" opacity="0.37"/><rect x="3" y="75" width="3" height="3" fill="#b04800" opacity="0.43"/><rect x="45" y="75" width="3" height="3" fill="#b04800" opacity="0.40"/><rect x="51" y="75" width="3" height="3" fill="#fff46a" opacity="0.49"/><rect x="0" y="78" width="3" height="3" fill="#b04800" opacity="0.32"/><rect x="12" y="78" width="3" height="3" fill="#b04800" opacity="0.34"/><rect x="39" y="78" width="3" height="3" fill="#b04800" opacity="0.34"/><rect x="42" y="78" width="3" height="3" fill="#b04800" opacity="0.30"/><rect x="69" y="78" width="3" height="3" fill="#fff46a" opacity="0.38"/><rect x="0" y="81" width="3" height="3" fill="#b04800" opacity="0.58"/><rect x="12" y="81" width="3" height="3" fill="#fff46a" opacity="0.46"/><rect x="15" y="81" width="3" height="3" fill="#fff46a" opacity="0.61"/><rect x="18" y="81" width="3" height="3" fill="#b04800" opacity="0.41"/><rect x="27" y="81" width="3" height="3" fill="#b04800" opacity="0.34"/><rect x="30" y="81" width="3" height="3" fill="#b04800" opacity="0.38"/><rect x="36" y="81" width="3" height="3" fill="#b04800" opacity="0.59"/><rect x="51" y="81" width="3" height="3" fill="#b04800" opacity="0.60"/><rect x="54" y="81" width="3" height="3" fill="#fff46a" opacity="0.50"/><rect x="69" y="81" width="3" height="3" fill="#b04800" opacity="0.49"/><rect x="6" y="84" width="3" height="3" fill="#b04800" opacity="0.55"/><rect x="9" y="84" width="3" height="3" fill="#b04800" opacity="0.32"/><rect x="12" y="84" width="3" height="3" fill="#b04800" opacity="0.64"/><rect x="15" y="84" width="3" height="3" fill="#b04800" opacity="0.54"/><rect x="18" y="84" width="3" height="3" fill="#b04800" opacity="0.51"/><rect x="21" y="84" width="3" height="3" fill="#b04800" opacity="0.51"/><rect x="36" y="84" width="3" height="3" fill="#b04800" opacity="0.32"/><rect x="39" y="84" width="3" height="3" fill="#fff46a" opacity="0.49"/><rect x="45" y="84" width="3" height="3" fill="#b04800" opacity="0.37"/><rect x="54" y="84" width="3" height="3" fill="#b04800" opacity="0.40"/><rect x="57" y="84" width="3" height="3" fill="#b04800" opacity="0.31"/><rect x="63" y="84" width="3" height="3" fill="#fff46a" opacity="0.56"/><rect x="66" y="84" width="3" height="3" fill="#fff46a" opacity="0.57"/><rect x="0" y="87" width="3" height="3" fill="#b04800" opacity="0.51"/><rect x="9" y="87" width="3" height="3" fill="#b04800" opacity="0.56"/><rect x="15" y="87" width="3" height="3" fill="#b04800" opacity="0.53"/><rect x="21" y="87" width="3" height="3" fill="#b04800" opacity="0.59"/><rect x="27" y="87" width="3" height="3" fill="#b04800" opacity="0.47"/><rect x="33" y="87" width="3" height="3" fill="#b04800" opacity="0.48"/><rect x="54" y="87" width="3" height="3" fill="#b04800" opacity="0.65"/><rect x="63" y="87" width="3" height="3" fill="#b04800" opacity="0.58"/><rect x="9" y="90" width="3" height="3" fill="#b04800" opacity="0.55"/><rect x="12" y="90" width="3" height="3" fill="#fff46a" opacity="0.36"/><rect x="18" y="90" width="3" height="3" fill="#b04800" opacity="0.58"/><rect x="30" y="90" width="3" height="3" fill="#fff46a" opacity="0.41"/><rect x="45" y="90" width="3" height="3" fill="#b04800" opacity="0.57"/><rect x="51" y="90" width="3" height="3" fill="#fff46a" opacity="0.54"/><rect x="54" y="90" width="3" height="3" fill="#b04800" opacity="0.64"/><rect x="60" y="90" width="3" height="3" fill="#b04800" opacity="0.55"/><rect x="33" y="93" width="3" height="3" fill="#b04800" opacity="0.53"/><rect x="42" y="93" width="3" height="3" fill="#b04800" opacity="0.55"/><rect x="51" y="93" width="3" height="3" fill="#b04800" opacity="0.61"/><rect x="60" y="93" width="3" height="3" fill="#b04800" opacity="0.39"/><rect x="66" y="93" width="3" height="3" fill="#b04800" opacity="0.64"/><rect x="69" y="93" width="3" height="3" fill="#b04800" opacity="0.35"/><rect x="3" y="96" width="3" height="3" fill="#fff46a" opacity="0.52"/><rect x="9" y="96" width="3" height="3" fill="#b04800" opacity="0.32"/><rect x="21" y="96" width="3" height="3" fill="#b04800" opacity="0.42"/><rect x="27" y="96" width="3" height="3" fill="#b04800" opacity="0.61"/><rect x="42" y="96" width="3" height="3" fill="#fff46a" opacity="0.55"/><rect x="48" y="96" width="3" height="3" fill="#b04800" opacity="0.33"/><rect x="54" y="96" width="3" height="3" fill="#b04800" opacity="0.62"/><rect x="60" y="96" width="3" height="3" fill="#fff46a" opacity="0.46"/><rect x="69" y="96" width="3" height="3" fill="#b04800" opacity="0.59"/><rect x="36" y="99" width="3" height="3" fill="#fff46a" opacity="0.63"/><rect x="54" y="99" width="3" height="3" fill="#fff46a" opacity="0.36"/><rect x="69" y="99" width="3" height="3" fill="#fff46a" opacity="0.38"/><rect x="27" y="102" width="3" height="3" fill="#fff46a" opacity="0.56"/><rect x="54" y="102" width="3" height="3" fill="#b04800" opacity="0.60"/><rect x="15" y="105" width="3" height="3" fill="#b04800" opacity="0.60"/><rect x="24" y="105" width="3" height="3" fill="#b04800" opacity="0.47"/><rect x="27" y="105" width="3" height="3" fill="#b04800" opacity="0.37"/><rect x="48" y="105" width="3" height="3" fill="#b04800" opacity="0.42"/><rect x="51" y="105" width="3" height="3" fill="#b04800" opacity="0.51"/><rect x="54" y="105" width="3" height="3" fill="#fff46a" opacity="0.53"/><rect x="60" y="105" width="3" height="3" fill="#b04800" opacity="0.38"/><rect width="72" height="108" fill="url(#p8)"/></g><g clip-path="url(#R8)"><rect x="72" width="72" height="108" fill="url(#b8)"/><rect x="90" y="0" width="3" height="3" fill="#58ccff" opacity="0.40"/><rect x="93" y="0" width="3" height="3" fill="#021a60" opacity="0.49"/><rect x="96" y="0" width="3" height="3" fill="#021a60" opacity="0.39"/><rect x="102" y="0" width="3" height="3" fill="#58ccff" opacity="0.37"/><rect x="141" y="0" width="3" height="3" fill="#58ccff" opacity="0.53"/><rect x="72" y="3" width="3" height="3" fill="#021a60" opacity="0.45"/><rect x="78" y="3" width="3" height="3" fill="#021a60" opacity="0.44"/><rect x="81" y="3" width="3" height="3" fill="#58ccff" opacity="0.52"/><rect x="87" y="3" width="3" height="3" fill="#58ccff" opacity="0.50"/><rect x="90" y="3" width="3" height="3" fill="#021a60" opacity="0.38"/><rect x="108" y="3" width="3" height="3" fill="#58ccff" opacity="0.59"/><rect x="123" y="3" width="3" height="3" fill="#58ccff" opacity="0.50"/><rect x="126" y="3" width="3" height="3" fill="#58ccff" opacity="0.55"/><rect x="132" y="3" width="3" height="3" fill="#58ccff" opacity="0.56"/><rect x="135" y="3" width="3" height="3" fill="#021a60" opacity="0.33"/><rect x="138" y="3" width="3" height="3" fill="#021a60" opacity="0.40"/><rect x="72" y="6" width="3" height="3" fill="#58ccff" opacity="0.62"/><rect x="75" y="6" width="3" height="3" fill="#021a60" opacity="0.60"/><rect x="78" y="6" width="3" height="3" fill="#021a60" opacity="0.41"/><rect x="90" y="6" width="3" height="3" fill="#021a60" opacity="0.51"/><rect x="93" y="6" width="3" height="3" fill="#021a60" opacity="0.36"/><rect x="96" y="6" width="3" height="3" fill="#58ccff" opacity="0.48"/><rect x="102" y="6" width="3" height="3" fill="#021a60" opacity="0.31"/><rect x="108" y="6" width="3" height="3" fill="#021a60" opacity="0.55"/><rect x="123" y="6" width="3" height="3" fill="#021a60" opacity="0.50"/><rect x="126" y="6" width="3" height="3" fill="#021a60" opacity="0.49"/><rect x="138" y="6" width="3" height="3" fill="#58ccff" opacity="0.45"/><rect x="75" y="9" width="3" height="3" fill="#021a60" opacity="0.44"/><rect x="81" y="9" width="3" height="3" fill="#021a60" opacity="0.59"/><rect x="90" y="9" width="3" height="3" fill="#021a60" opacity="0.49"/><rect x="93" y="9" width="3" height="3" fill="#021a60" opacity="0.61"/><rect x="96" y="9" width="3" height="3" fill="#021a60" opacity="0.32"/><rect x="102" y="9" width="3" height="3" fill="#021a60" opacity="0.60"/><rect x="105" y="9" width="3" height="3" fill="#021a60" opacity="0.34"/><rect x="108" y="9" width="3" height="3" fill="#58ccff" opacity="0.45"/><rect x="117" y="9" width="3" height="3" fill="#58ccff" opacity="0.61"/><rect x="120" y="9" width="3" height="3" fill="#021a60" opacity="0.47"/><rect x="132" y="9" width="3" height="3" fill="#021a60" opacity="0.65"/><rect x="135" y="9" width="3" height="3" fill="#58ccff" opacity="0.53"/><rect x="138" y="9" width="3" height="3" fill="#021a60" opacity="0.33"/><rect x="78" y="12" width="3" height="3" fill="#58ccff" opacity="0.39"/><rect x="87" y="12" width="3" height="3" fill="#021a60" opacity="0.34"/><rect x="90" y="12" width="3" height="3" fill="#021a60" opacity="0.33"/><rect x="108" y="12" width="3" height="3" fill="#58ccff" opacity="0.47"/><rect x="123" y="12" width="3" height="3" fill="#58ccff" opacity="0.56"/><rect x="75" y="15" width="3" height="3" fill="#021a60" opacity="0.65"/><rect x="78" y="15" width="3" height="3" fill="#021a60" opacity="0.57"/><rect x="87" y="15" width="3" height="3" fill="#58ccff" opacity="0.47"/><rect x="90" y="15" width="3" height="3" fill="#021a60" opacity="0.61"/><rect x="96" y="15" width="3" height="3" fill="#021a60" opacity="0.42"/><rect x="99" y="15" width="3" height="3" fill="#58ccff" opacity="0.47"/><rect x="102" y="15" width="3" height="3" fill="#58ccff" opacity="0.39"/><rect x="117" y="15" width="3" height="3" fill="#58ccff" opacity="0.63"/><rect x="126" y="15" width="3" height="3" fill="#021a60" opacity="0.57"/><rect x="138" y="15" width="3" height="3" fill="#021a60" opacity="0.49"/><rect x="72" y="18" width="3" height="3" fill="#021a60" opacity="0.51"/><rect x="75" y="18" width="3" height="3" fill="#58ccff" opacity="0.30"/><rect x="78" y="18" width="3" height="3" fill="#021a60" opacity="0.44"/><rect x="81" y="18" width="3" height="3" fill="#021a60" opacity="0.36"/><rect x="84" y="18" width="3" height="3" fill="#58ccff" opacity="0.57"/><rect x="96" y="18" width="3" height="3" fill="#021a60" opacity="0.61"/><rect x="108" y="18" width="3" height="3" fill="#021a60" opacity="0.44"/><rect x="120" y="18" width="3" height="3" fill="#021a60" opacity="0.39"/><rect x="129" y="18" width="3" height="3" fill="#58ccff" opacity="0.32"/><rect x="84" y="21" width="3" height="3" fill="#021a60" opacity="0.55"/><rect x="99" y="21" width="3" height="3" fill="#021a60" opacity="0.61"/><rect x="102" y="21" width="3" height="3" fill="#021a60" opacity="0.59"/><rect x="108" y="21" width="3" height="3" fill="#021a60" opacity="0.49"/><rect x="114" y="21" width="3" height="3" fill="#58ccff" opacity="0.35"/><rect x="120" y="21" width="3" height="3" fill="#021a60" opacity="0.65"/><rect x="123" y="21" width="3" height="3" fill="#58ccff" opacity="0.63"/><rect x="129" y="21" width="3" height="3" fill="#021a60" opacity="0.38"/><rect x="135" y="21" width="3" height="3" fill="#021a60" opacity="0.38"/><rect x="138" y="21" width="3" height="3" fill="#58ccff" opacity="0.34"/><rect x="75" y="24" width="3" height="3" fill="#58ccff" opacity="0.43"/><rect x="78" y="24" width="3" height="3" fill="#021a60" opacity="0.51"/><rect x="93" y="24" width="3" height="3" fill="#58ccff" opacity="0.38"/><rect x="96" y="24" width="3" height="3" fill="#021a60" opacity="0.54"/><rect x="102" y="24" width="3" height="3" fill="#021a60" opacity="0.55"/><rect x="108" y="24" width="3" height="3" fill="#021a60" opacity="0.52"/><rect x="117" y="24" width="3" height="3" fill="#58ccff" opacity="0.43"/><rect x="120" y="24" width="3" height="3" fill="#021a60" opacity="0.38"/><rect x="129" y="24" width="3" height="3" fill="#58ccff" opacity="0.53"/><rect x="138" y="24" width="3" height="3" fill="#021a60" opacity="0.42"/><rect x="72" y="27" width="3" height="3" fill="#021a60" opacity="0.47"/><rect x="75" y="27" width="3" height="3" fill="#58ccff" opacity="0.36"/><rect x="81" y="27" width="3" height="3" fill="#58ccff" opacity="0.40"/><rect x="93" y="27" width="3" height="3" fill="#021a60" opacity="0.58"/><rect x="114" y="27" width="3" height="3" fill="#021a60" opacity="0.60"/><rect x="117" y="27" width="3" height="3" fill="#58ccff" opacity="0.49"/><rect x="126" y="27" width="3" height="3" fill="#021a60" opacity="0.48"/><rect x="132" y="27" width="3" height="3" fill="#58ccff" opacity="0.58"/><rect x="141" y="27" width="3" height="3" fill="#021a60" opacity="0.36"/><rect x="72" y="30" width="3" height="3" fill="#58ccff" opacity="0.47"/><rect x="81" y="30" width="3" height="3" fill="#021a60" opacity="0.38"/><rect x="87" y="30" width="3" height="3" fill="#021a60" opacity="0.63"/><rect x="96" y="30" width="3" height="3" fill="#021a60" opacity="0.60"/><rect x="105" y="30" width="3" height="3" fill="#58ccff" opacity="0.42"/><rect x="111" y="30" width="3" height="3" fill="#58ccff" opacity="0.64"/><rect x="126" y="30" width="3" height="3" fill="#58ccff" opacity="0.35"/><rect x="129" y="30" width="3" height="3" fill="#021a60" opacity="0.52"/><rect x="135" y="30" width="3" height="3" fill="#58ccff" opacity="0.49"/><rect x="138" y="30" width="3" height="3" fill="#58ccff" opacity="0.53"/><rect x="96" y="33" width="3" height="3" fill="#58ccff" opacity="0.43"/><rect x="99" y="33" width="3" height="3" fill="#58ccff" opacity="0.54"/><rect x="105" y="33" width="3" height="3" fill="#021a60" opacity="0.47"/><rect x="108" y="33" width="3" height="3" fill="#58ccff" opacity="0.40"/><rect x="111" y="33" width="3" height="3" fill="#021a60" opacity="0.60"/><rect x="120" y="33" width="3" height="3" fill="#021a60" opacity="0.56"/><rect x="132" y="33" width="3" height="3" fill="#58ccff" opacity="0.32"/><rect x="141" y="33" width="3" height="3" fill="#021a60" opacity="0.48"/><rect x="75" y="36" width="3" height="3" fill="#58ccff" opacity="0.34"/><rect x="78" y="36" width="3" height="3" fill="#58ccff" opacity="0.51"/><rect x="87" y="36" width="3" height="3" fill="#021a60" opacity="0.46"/><rect x="90" y="36" width="3" height="3" fill="#58ccff" opacity="0.62"/><rect x="111" y="36" width="3" height="3" fill="#58ccff" opacity="0.54"/><rect x="120" y="36" width="3" height="3" fill="#58ccff" opacity="0.33"/><rect x="123" y="36" width="3" height="3" fill="#58ccff" opacity="0.50"/><rect x="129" y="36" width="3" height="3" fill="#021a60" opacity="0.61"/><rect x="81" y="39" width="3" height="3" fill="#021a60" opacity="0.61"/><rect x="90" y="39" width="3" height="3" fill="#58ccff" opacity="0.41"/><rect x="105" y="39" width="3" height="3" fill="#58ccff" opacity="0.35"/><rect x="108" y="39" width="3" height="3" fill="#021a60" opacity="0.41"/><rect x="111" y="39" width="3" height="3" fill="#021a60" opacity="0.51"/><rect x="120" y="39" width="3" height="3" fill="#58ccff" opacity="0.38"/><rect x="126" y="39" width="3" height="3" fill="#021a60" opacity="0.44"/><rect x="129" y="39" width="3" height="3" fill="#021a60" opacity="0.55"/><rect x="135" y="39" width="3" height="3" fill="#021a60" opacity="0.36"/><rect x="138" y="39" width="3" height="3" fill="#58ccff" opacity="0.37"/><rect x="75" y="42" width="3" height="3" fill="#021a60" opacity="0.42"/><rect x="84" y="42" width="3" height="3" fill="#58ccff" opacity="0.62"/><rect x="87" y="42" width="3" height="3" fill="#021a60" opacity="0.39"/><rect x="96" y="42" width="3" height="3" fill="#58ccff" opacity="0.35"/><rect x="102" y="42" width="3" height="3" fill="#021a60" opacity="0.61"/><rect x="114" y="42" width="3" height="3" fill="#021a60" opacity="0.33"/><rect x="120" y="42" width="3" height="3" fill="#58ccff" opacity="0.54"/><rect x="135" y="42" width="3" height="3" fill="#021a60" opacity="0.31"/><rect x="138" y="42" width="3" height="3" fill="#021a60" opacity="0.57"/><rect x="78" y="45" width="3" height="3" fill="#021a60" opacity="0.51"/><rect x="102" y="45" width="3" height="3" fill="#58ccff" opacity="0.62"/><rect x="126" y="45" width="3" height="3" fill="#021a60" opacity="0.46"/><rect x="129" y="45" width="3" height="3" fill="#58ccff" opacity="0.33"/><rect x="132" y="45" width="3" height="3" fill="#021a60" opacity="0.56"/><rect x="135" y="45" width="3" height="3" fill="#021a60" opacity="0.53"/><rect x="138" y="45" width="3" height="3" fill="#021a60" opacity="0.36"/><rect x="87" y="48" width="3" height="3" fill="#021a60" opacity="0.45"/><rect x="93" y="48" width="3" height="3" fill="#021a60" opacity="0.48"/><rect x="102" y="48" width="3" height="3" fill="#021a60" opacity="0.59"/><rect x="108" y="48" width="3" height="3" fill="#58ccff" opacity="0.31"/><rect x="123" y="48" width="3" height="3" fill="#58ccff" opacity="0.52"/><rect x="138" y="48" width="3" height="3" fill="#021a60" opacity="0.62"/><rect x="141" y="48" width="3" height="3" fill="#021a60" opacity="0.47"/><rect x="75" y="51" width="3" height="3" fill="#021a60" opacity="0.40"/><rect x="81" y="51" width="3" height="3" fill="#021a60" opacity="0.48"/><rect x="87" y="51" width="3" height="3" fill="#58ccff" opacity="0.55"/><rect x="102" y="51" width="3" height="3" fill="#021a60" opacity="0.50"/><rect x="105" y="51" width="3" height="3" fill="#58ccff" opacity="0.35"/><rect x="108" y="51" width="3" height="3" fill="#58ccff" opacity="0.61"/><rect x="120" y="51" width="3" height="3" fill="#021a60" opacity="0.50"/><rect x="129" y="51" width="3" height="3" fill="#58ccff" opacity="0.41"/><rect x="138" y="51" width="3" height="3" fill="#021a60" opacity="0.35"/><rect x="81" y="54" width="3" height="3" fill="#58ccff" opacity="0.44"/><rect x="90" y="54" width="3" height="3" fill="#58ccff" opacity="0.43"/><rect x="93" y="54" width="3" height="3" fill="#021a60" opacity="0.42"/><rect x="102" y="54" width="3" height="3" fill="#021a60" opacity="0.51"/><rect x="117" y="54" width="3" height="3" fill="#021a60" opacity="0.58"/><rect x="120" y="54" width="3" height="3" fill="#58ccff" opacity="0.41"/><rect x="123" y="54" width="3" height="3" fill="#58ccff" opacity="0.63"/><rect x="132" y="54" width="3" height="3" fill="#58ccff" opacity="0.55"/><rect x="135" y="54" width="3" height="3" fill="#021a60" opacity="0.46"/><rect x="81" y="57" width="3" height="3" fill="#021a60" opacity="0.52"/><rect x="87" y="57" width="3" height="3" fill="#021a60" opacity="0.42"/><rect x="90" y="57" width="3" height="3" fill="#58ccff" opacity="0.61"/><rect x="96" y="57" width="3" height="3" fill="#58ccff" opacity="0.41"/><rect x="99" y="57" width="3" height="3" fill="#58ccff" opacity="0.34"/><rect x="102" y="57" width="3" height="3" fill="#021a60" opacity="0.39"/><rect x="105" y="57" width="3" height="3" fill="#021a60" opacity="0.53"/><rect x="108" y="57" width="3" height="3" fill="#021a60" opacity="0.58"/><rect x="114" y="57" width="3" height="3" fill="#021a60" opacity="0.42"/><rect x="123" y="57" width="3" height="3" fill="#021a60" opacity="0.57"/><rect x="126" y="57" width="3" height="3" fill="#58ccff" opacity="0.57"/><rect x="132" y="57" width="3" height="3" fill="#58ccff" opacity="0.36"/><rect x="135" y="57" width="3" height="3" fill="#58ccff" opacity="0.54"/><rect x="141" y="57" width="3" height="3" fill="#021a60" opacity="0.39"/><rect x="72" y="60" width="3" height="3" fill="#58ccff" opacity="0.30"/><rect x="81" y="60" width="3" height="3" fill="#021a60" opacity="0.32"/><rect x="102" y="60" width="3" height="3" fill="#58ccff" opacity="0.43"/><rect x="105" y="60" width="3" height="3" fill="#021a60" opacity="0.48"/><rect x="123" y="60" width="3" height="3" fill="#58ccff" opacity="0.31"/><rect x="126" y="60" width="3" height="3" fill="#021a60" opacity="0.63"/><rect x="129" y="60" width="3" height="3" fill="#58ccff" opacity="0.64"/><rect x="135" y="60" width="3" height="3" fill="#021a60" opacity="0.47"/><rect x="138" y="60" width="3" height="3" fill="#021a60" opacity="0.42"/><rect x="141" y="60" width="3" height="3" fill="#58ccff" opacity="0.37"/><rect x="72" y="63" width="3" height="3" fill="#021a60" opacity="0.32"/><rect x="78" y="63" width="3" height="3" fill="#58ccff" opacity="0.48"/><rect x="81" y="63" width="3" height="3" fill="#021a60" opacity="0.47"/><rect x="90" y="63" width="3" height="3" fill="#021a60" opacity="0.64"/><rect x="96" y="63" width="3" height="3" fill="#58ccff" opacity="0.34"/><rect x="99" y="63" width="3" height="3" fill="#021a60" opacity="0.38"/><rect x="102" y="63" width="3" height="3" fill="#021a60" opacity="0.51"/><rect x="75" y="66" width="3" height="3" fill="#021a60" opacity="0.62"/><rect x="78" y="66" width="3" height="3" fill="#58ccff" opacity="0.53"/><rect x="84" y="66" width="3" height="3" fill="#021a60" opacity="0.52"/><rect x="138" y="66" width="3" height="3" fill="#021a60" opacity="0.44"/><rect x="141" y="66" width="3" height="3" fill="#58ccff" opacity="0.59"/><rect x="87" y="69" width="3" height="3" fill="#021a60" opacity="0.44"/><rect x="93" y="69" width="3" height="3" fill="#021a60" opacity="0.48"/><rect x="96" y="69" width="3" height="3" fill="#58ccff" opacity="0.38"/><rect x="99" y="69" width="3" height="3" fill="#58ccff" opacity="0.39"/><rect x="105" y="69" width="3" height="3" fill="#021a60" opacity="0.62"/><rect x="108" y="69" width="3" height="3" fill="#021a60" opacity="0.64"/><rect x="117" y="69" width="3" height="3" fill="#58ccff" opacity="0.30"/><rect x="126" y="69" width="3" height="3" fill="#021a60" opacity="0.61"/><rect x="129" y="69" width="3" height="3" fill="#58ccff" opacity="0.36"/><rect x="138" y="69" width="3" height="3" fill="#021a60" opacity="0.40"/><rect x="78" y="72" width="3" height="3" fill="#021a60" opacity="0.63"/><rect x="81" y="72" width="3" height="3" fill="#58ccff" opacity="0.36"/><rect x="102" y="72" width="3" height="3" fill="#58ccff" opacity="0.42"/><rect x="105" y="72" width="3" height="3" fill="#021a60" opacity="0.34"/><rect x="108" y="72" width="3" height="3" fill="#58ccff" opacity="0.33"/><rect x="114" y="72" width="3" height="3" fill="#021a60" opacity="0.51"/><rect x="129" y="72" width="3" height="3" fill="#021a60" opacity="0.52"/><rect x="132" y="72" width="3" height="3" fill="#021a60" opacity="0.38"/><rect x="78" y="75" width="3" height="3" fill="#021a60" opacity="0.55"/><rect x="84" y="75" width="3" height="3" fill="#021a60" opacity="0.45"/><rect x="90" y="75" width="3" height="3" fill="#021a60" opacity="0.40"/><rect x="93" y="75" width="3" height="3" fill="#58ccff" opacity="0.61"/><rect x="96" y="75" width="3" height="3" fill="#021a60" opacity="0.35"/><rect x="99" y="75" width="3" height="3" fill="#58ccff" opacity="0.46"/><rect x="108" y="75" width="3" height="3" fill="#021a60" opacity="0.41"/><rect x="114" y="75" width="3" height="3" fill="#021a60" opacity="0.40"/><rect x="129" y="75" width="3" height="3" fill="#58ccff" opacity="0.58"/><rect x="138" y="75" width="3" height="3" fill="#021a60" opacity="0.50"/><rect x="87" y="78" width="3" height="3" fill="#021a60" opacity="0.59"/><rect x="90" y="78" width="3" height="3" fill="#58ccff" opacity="0.59"/><rect x="93" y="78" width="3" height="3" fill="#021a60" opacity="0.51"/><rect x="99" y="78" width="3" height="3" fill="#021a60" opacity="0.49"/><rect x="102" y="78" width="3" height="3" fill="#021a60" opacity="0.33"/><rect x="105" y="78" width="3" height="3" fill="#021a60" opacity="0.40"/><rect x="108" y="78" width="3" height="3" fill="#021a60" opacity="0.57"/><rect x="111" y="78" width="3" height="3" fill="#021a60" opacity="0.44"/><rect x="114" y="78" width="3" height="3" fill="#021a60" opacity="0.32"/><rect x="129" y="78" width="3" height="3" fill="#021a60" opacity="0.45"/><rect x="132" y="78" width="3" height="3" fill="#021a60" opacity="0.56"/><rect x="141" y="78" width="3" height="3" fill="#58ccff" opacity="0.31"/><rect x="75" y="81" width="3" height="3" fill="#021a60" opacity="0.62"/><rect x="78" y="81" width="3" height="3" fill="#021a60" opacity="0.57"/><rect x="87" y="81" width="3" height="3" fill="#021a60" opacity="0.45"/><rect x="90" y="81" width="3" height="3" fill="#58ccff" opacity="0.41"/><rect x="96" y="81" width="3" height="3" fill="#021a60" opacity="0.35"/><rect x="102" y="81" width="3" height="3" fill="#021a60" opacity="0.63"/><rect x="108" y="81" width="3" height="3" fill="#021a60" opacity="0.62"/><rect x="114" y="81" width="3" height="3" fill="#021a60" opacity="0.47"/><rect x="120" y="81" width="3" height="3" fill="#58ccff" opacity="0.52"/><rect x="123" y="81" width="3" height="3" fill="#58ccff" opacity="0.32"/><rect x="129" y="81" width="3" height="3" fill="#58ccff" opacity="0.44"/><rect x="75" y="84" width="3" height="3" fill="#58ccff" opacity="0.56"/><rect x="78" y="84" width="3" height="3" fill="#021a60" opacity="0.38"/><rect x="81" y="84" width="3" height="3" fill="#58ccff" opacity="0.51"/><rect x="84" y="84" width="3" height="3" fill="#021a60" opacity="0.64"/><rect x="93" y="84" width="3" height="3" fill="#58ccff" opacity="0.61"/><rect x="105" y="84" width="3" height="3" fill="#58ccff" opacity="0.56"/><rect x="108" y="84" width="3" height="3" fill="#021a60" opacity="0.40"/><rect x="117" y="84" width="3" height="3" fill="#021a60" opacity="0.40"/><rect x="120" y="84" width="3" height="3" fill="#58ccff" opacity="0.59"/><rect x="141" y="84" width="3" height="3" fill="#021a60" opacity="0.41"/><rect x="75" y="87" width="3" height="3" fill="#58ccff" opacity="0.31"/><rect x="84" y="87" width="3" height="3" fill="#021a60" opacity="0.44"/><rect x="87" y="87" width="3" height="3" fill="#021a60" opacity="0.40"/><rect x="99" y="87" width="3" height="3" fill="#021a60" opacity="0.46"/><rect x="105" y="87" width="3" height="3" fill="#021a60" opacity="0.43"/><rect x="126" y="87" width="3" height="3" fill="#58ccff" opacity="0.31"/><rect x="129" y="87" width="3" height="3" fill="#021a60" opacity="0.60"/><rect x="138" y="87" width="3" height="3" fill="#021a60" opacity="0.51"/><rect x="141" y="87" width="3" height="3" fill="#021a60" opacity="0.37"/><rect x="93" y="90" width="3" height="3" fill="#021a60" opacity="0.48"/><rect x="96" y="90" width="3" height="3" fill="#021a60" opacity="0.41"/><rect x="102" y="90" width="3" height="3" fill="#58ccff" opacity="0.62"/><rect x="111" y="90" width="3" height="3" fill="#58ccff" opacity="0.42"/><rect x="123" y="90" width="3" height="3" fill="#58ccff" opacity="0.47"/><rect x="126" y="90" width="3" height="3" fill="#58ccff" opacity="0.31"/><rect x="129" y="90" width="3" height="3" fill="#58ccff" opacity="0.64"/><rect x="72" y="93" width="3" height="3" fill="#021a60" opacity="0.62"/><rect x="78" y="93" width="3" height="3" fill="#021a60" opacity="0.49"/><rect x="81" y="93" width="3" height="3" fill="#021a60" opacity="0.53"/><rect x="87" y="93" width="3" height="3" fill="#021a60" opacity="0.55"/><rect x="111" y="93" width="3" height="3" fill="#021a60" opacity="0.60"/><rect x="117" y="93" width="3" height="3" fill="#58ccff" opacity="0.47"/><rect x="120" y="93" width="3" height="3" fill="#021a60" opacity="0.47"/><rect x="123" y="93" width="3" height="3" fill="#021a60" opacity="0.36"/><rect x="126" y="93" width="3" height="3" fill="#58ccff" opacity="0.63"/><rect x="132" y="93" width="3" height="3" fill="#021a60" opacity="0.49"/><rect x="138" y="93" width="3" height="3" fill="#58ccff" opacity="0.64"/><rect x="87" y="96" width="3" height="3" fill="#58ccff" opacity="0.64"/><rect x="93" y="96" width="3" height="3" fill="#58ccff" opacity="0.49"/><rect x="105" y="96" width="3" height="3" fill="#021a60" opacity="0.56"/><rect x="111" y="96" width="3" height="3" fill="#021a60" opacity="0.57"/><rect x="126" y="96" width="3" height="3" fill="#58ccff" opacity="0.31"/><rect x="129" y="96" width="3" height="3" fill="#021a60" opacity="0.31"/><rect x="132" y="96" width="3" height="3" fill="#021a60" opacity="0.34"/><rect x="135" y="96" width="3" height="3" fill="#021a60" opacity="0.50"/><rect x="141" y="96" width="3" height="3" fill="#021a60" opacity="0.54"/><rect x="75" y="99" width="3" height="3" fill="#021a60" opacity="0.37"/><rect x="87" y="99" width="3" height="3" fill="#021a60" opacity="0.46"/><rect x="96" y="99" width="3" height="3" fill="#58ccff" opacity="0.36"/><rect x="99" y="99" width="3" height="3" fill="#021a60" opacity="0.53"/><rect x="102" y="99" width="3" height="3" fill="#021a60" opacity="0.36"/><rect x="105" y="99" width="3" height="3" fill="#021a60" opacity="0.56"/><rect x="108" y="99" width="3" height="3" fill="#021a60" opacity="0.61"/><rect x="129" y="99" width="3" height="3" fill="#021a60" opacity="0.32"/><rect x="132" y="99" width="3" height="3" fill="#58ccff" opacity="0.38"/><rect x="75" y="102" width="3" height="3" fill="#021a60" opacity="0.36"/><rect x="78" y="102" width="3" height="3" fill="#58ccff" opacity="0.45"/><rect x="84" y="102" width="3" height="3" fill="#58ccff" opacity="0.44"/><rect x="87" y="102" width="3" height="3" fill="#021a60" opacity="0.57"/><rect x="96" y="102" width="3" height="3" fill="#021a60" opacity="0.44"/><rect x="105" y="102" width="3" height="3" fill="#021a60" opacity="0.54"/><rect x="111" y="102" width="3" height="3" fill="#58ccff" opacity="0.41"/><rect x="117" y="102" width="3" height="3" fill="#021a60" opacity="0.57"/><rect x="126" y="102" width="3" height="3" fill="#021a60" opacity="0.41"/><rect x="135" y="102" width="3" height="3" fill="#021a60" opacity="0.54"/><rect x="141" y="102" width="3" height="3" fill="#021a60" opacity="0.64"/><rect x="75" y="105" width="3" height="3" fill="#021a60" opacity="0.40"/><rect x="81" y="105" width="3" height="3" fill="#021a60" opacity="0.39"/><rect x="87" y="105" width="3" height="3" fill="#021a60" opacity="0.57"/><rect x="96" y="105" width="3" height="3" fill="#021a60" opacity="0.41"/><rect x="99" y="105" width="3" height="3" fill="#58ccff" opacity="0.46"/><rect x="102" y="105" width="3" height="3" fill="#021a60" opacity="0.48"/><rect x="105" y="105" width="3" height="3" fill="#021a60" opacity="0.61"/><rect x="111" y="105" width="3" height="3" fill="#58ccff" opacity="0.51"/><rect x="114" y="105" width="3" height="3" fill="#021a60" opacity="0.62"/><rect x="126" y="105" width="3" height="3" fill="#58ccff" opacity="0.39"/><rect x="138" y="105" width="3" height="3" fill="#021a60" opacity="0.51"/><rect x="72" width="72" height="108" fill="url(#p8)"/></g></svg>
<svg class="th" style="left:432px;top:764px" width="144" height="108" viewBox="0 0 144 108"><defs><clipPath id="L9"><rect x="0" y="0" width="72" height="108"/></clipPath><clipPath id="R9"><rect x="72" y="0" width="72" height="108"/></clipPath>
<pattern id="p9" width="10" height="10.800" patternUnits="userSpaceOnUse"><path d="M0 1.500 L5 4.300 L10 1.500 M-5 9.700 L0 6.900 L5 9.700 L10 6.900 L15 9.700" fill="none" stroke="#14141c" stroke-width="1"/></pattern>
</defs><g clip-path="url(#L9)"><rect width="72" height="108" fill="#d2d5df"/><rect width="72" height="108" fill="url(#p9)"/><path d="M5 73.0 L10 69.8 L15 73.0 L10 76.2z" fill="#26262c" opacity="1"/><path d="M5 73.0 L10 76.0 L15 73.0" fill="none" stroke="#14141c" stroke-width="1" opacity="1"/><path d="M45 51.4 L50 48.2 L55 51.4 L50 54.6z" fill="#8a2ab8" opacity="1"/><path d="M45 51.4 L50 54.4 L55 51.4" fill="none" stroke="#14141c" stroke-width="1" opacity="1"/><path d="M60 35.2 L65 32.0 L70 35.2 L65 38.4z" fill="#8a2ab8" opacity="1"/><path d="M60 35.2 L65 38.2 L70 35.2" fill="none" stroke="#14141c" stroke-width="1" opacity="1"/><path d="M55 89.2 L60 86.0 L65 89.2 L60 92.4z" fill="#1a6cd0" opacity="1"/><path d="M55 89.2 L60 92.2 L65 89.2" fill="none" stroke="#14141c" stroke-width="1" opacity="1"/><path d="M35 89.2 L40 86.0 L45 89.2 L40 92.4z" fill="#d07a18" opacity="1"/><path d="M35 89.2 L40 92.2 L45 89.2" fill="none" stroke="#14141c" stroke-width="1" opacity="1"/><path d="M55 2.8 L60 -0.4 L65 2.8 L60 6.0z" fill="#8a2ab8" opacity="1"/><path d="M55 2.8 L60 5.8 L65 2.8" fill="none" stroke="#14141c" stroke-width="1" opacity="1"/><path d="M20 100.0 L25 96.8 L30 100.0 L25 103.2z" fill="#26262c" opacity="1"/><path d="M20 100.0 L25 103.0 L30 100.0" fill="none" stroke="#14141c" stroke-width="1" opacity="1"/><path d="M0 24.4 L5 21.2 L10 24.4 L5 27.6z" fill="#d07a18" opacity="1"/><path d="M0 24.4 L5 27.4 L10 24.4" fill="none" stroke="#14141c" stroke-width="1" opacity="1"/><path d="M65 40.6 L70 37.4 L75 40.6 L70 43.8z" fill="#8a2ab8" opacity="1"/><path d="M65 40.6 L70 43.6 L75 40.6" fill="none" stroke="#14141c" stroke-width="1" opacity="1"/><path d="M25 73.0 L30 69.8 L35 73.0 L30 76.2z" fill="#8a2ab8" opacity="1"/><path d="M25 73.0 L30 76.0 L35 73.0" fill="none" stroke="#14141c" stroke-width="1" opacity="1"/><path d="M-5 56.8 L0 53.6 L5 56.8 L0 60.0z" fill="#8a2ab8" opacity="1"/><path d="M-5 56.8 L0 59.8 L5 56.8" fill="none" stroke="#14141c" stroke-width="1" opacity="1"/><path d="M50 19.0 L55 15.8 L60 19.0 L55 22.2z" fill="#c81a8a" opacity="1"/><path d="M50 19.0 L55 22.0 L60 19.0" fill="none" stroke="#14141c" stroke-width="1" opacity="1"/><path d="M-5 24.4 L0 21.2 L5 24.4 L0 27.6z" fill="#8a2ab8" opacity="1"/><path d="M-5 24.4 L0 27.4 L5 24.4" fill="none" stroke="#14141c" stroke-width="1" opacity="1"/><path d="M0 2.8 L5 -0.4 L10 2.8 L5 6.0z" fill="#8a2ab8" opacity="1"/><path d="M0 2.8 L5 5.8 L10 2.8" fill="none" stroke="#14141c" stroke-width="1" opacity="1"/><path d="M5 94.6 L10 91.4 L15 94.6 L10 97.8z" fill="#c81a8a" opacity="1"/><path d="M5 94.6 L10 97.6 L15 94.6" fill="none" stroke="#14141c" stroke-width="1" opacity="1"/><path d="M25 83.8 L30 80.6 L35 83.8 L30 87.0z" fill="#1a6cd0" opacity="1"/><path d="M25 83.8 L30 86.8 L35 83.8" fill="none" stroke="#14141c" stroke-width="1" opacity="1"/><path d="M5 8.2 L10 5.0 L15 8.2 L10 11.4z" fill="#8a2ab8" opacity="1"/><path d="M5 8.2 L10 11.2 L15 8.2" fill="none" stroke="#14141c" stroke-width="1" opacity="1"/><path d="M60 40.6 L65 37.4 L70 40.6 L65 43.8z" fill="#8a2ab8" opacity="1"/><path d="M60 40.6 L65 43.6 L70 40.6" fill="none" stroke="#14141c" stroke-width="1" opacity="1"/><path d="M55 35.2 L60 32.0 L65 35.2 L60 38.4z" fill="#d07a18" opacity="1"/><path d="M55 35.2 L60 38.2 L65 35.2" fill="none" stroke="#14141c" stroke-width="1" opacity="1"/><path d="M45 100.0 L50 96.8 L55 100.0 L50 103.2z" fill="#8a2ab8" opacity="1"/><path d="M45 100.0 L50 103.0 L55 100.0" fill="none" stroke="#14141c" stroke-width="1" opacity="1"/><path d="M0 94.6 L5 91.4 L10 94.6 L5 97.8z" fill="#8a2ab8" opacity="1"/><path d="M0 94.6 L5 97.6 L10 94.6" fill="none" stroke="#14141c" stroke-width="1" opacity="1"/><path d="M35 67.6 L40 64.4 L45 67.6 L40 70.8z" fill="#d07a18" opacity="1"/><path d="M35 67.6 L40 70.6 L45 67.6" fill="none" stroke="#14141c" stroke-width="1" opacity="1"/><path d="M20 24.4 L25 21.2 L30 24.4 L25 27.6z" fill="#26262c" opacity="1"/><path d="M20 24.4 L25 27.4 L30 24.4" fill="none" stroke="#14141c" stroke-width="1" opacity="1"/><path d="M15 62.2 L20 59.0 L25 62.2 L20 65.4z" fill="#8a2ab8" opacity="1"/><path d="M15 62.2 L20 65.2 L25 62.2" fill="none" stroke="#14141c" stroke-width="1" opacity="1"/><path d="M35 67.6 L40 64.4 L45 67.6 L40 70.8z" fill="#c81a8a" opacity="1"/><path d="M35 67.6 L40 70.6 L45 67.6" fill="none" stroke="#14141c" stroke-width="1" opacity="1"/><path d="M30 67.6 L35 64.4 L40 67.6 L35 70.8z" fill="#1fb57a" opacity="1"/><path d="M30 67.6 L35 70.6 L40 67.6" fill="none" stroke="#14141c" stroke-width="1" opacity="1"/><path d="M-5 13.6 L0 10.4 L5 13.6 L0 16.8z" fill="#1a6cd0" opacity="1"/><path d="M-5 13.6 L0 16.6 L5 13.6" fill="none" stroke="#14141c" stroke-width="1" opacity="1"/><path d="M50 83.8 L55 80.6 L60 83.8 L55 87.0z" fill="#8a2ab8" opacity="1"/><path d="M50 83.8 L55 86.8 L60 83.8" fill="none" stroke="#14141c" stroke-width="1" opacity="1"/><path d="M30 13.6 L35 10.4 L40 13.6 L35 16.8z" fill="#d07a18" opacity="1"/><path d="M30 13.6 L35 16.6 L40 13.6" fill="none" stroke="#14141c" stroke-width="1" opacity="1"/><path d="M40 105.4 L45 102.2 L50 105.4 L45 108.6z" fill="#c81a8a" opacity="1"/><path d="M40 105.4 L45 108.4 L50 105.4" fill="none" stroke="#14141c" stroke-width="1" opacity="1"/><path d="M35 105.4 L40 102.2 L45 105.4 L40 108.6z" fill="#8a2ab8" opacity="1"/><path d="M35 105.4 L40 108.4 L45 105.4" fill="none" stroke="#14141c" stroke-width="1" opacity="1"/><path d="M5 29.8 L10 26.6 L15 29.8 L10 33.0z" fill="#c81a8a" opacity="1"/><path d="M5 29.8 L10 32.8 L15 29.8" fill="none" stroke="#14141c" stroke-width="1" opacity="1"/><path d="M60 56.8 L65 53.6 L70 56.8 L65 60.0z" fill="#c81a8a" opacity="1"/><path d="M60 56.8 L65 59.8 L70 56.8" fill="none" stroke="#14141c" stroke-width="1" opacity="1"/><path d="M55 105.4 L60 102.2 L65 105.4 L60 108.6z" fill="#1fb57a" opacity="1"/><path d="M55 105.4 L60 108.4 L65 105.4" fill="none" stroke="#14141c" stroke-width="1" opacity="1"/><path d="M10 19.0 L15 15.8 L20 19.0 L15 22.2z" fill="#1a6cd0" opacity="1"/><path d="M10 19.0 L15 22.0 L20 19.0" fill="none" stroke="#14141c" stroke-width="1" opacity="1"/><path d="M0 29.8 L5 26.6 L10 29.8 L5 33.0z" fill="#26262c" opacity="1"/><path d="M0 29.8 L5 32.8 L10 29.8" fill="none" stroke="#14141c" stroke-width="1" opacity="1"/><path d="M20 29.8 L25 26.6 L30 29.8 L25 33.0z" fill="#8a2ab8" opacity="1"/><path d="M20 29.8 L25 32.8 L30 29.8" fill="none" stroke="#14141c" stroke-width="1" opacity="1"/><path d="M45 89.2 L50 86.0 L55 89.2 L50 92.4z" fill="#d07a18" opacity="1"/><path d="M45 89.2 L50 92.2 L55 89.2" fill="none" stroke="#14141c" stroke-width="1" opacity="1"/><path d="M25 29.8 L30 26.6 L35 29.8 L30 33.0z" fill="#8a2ab8" opacity="1"/><path d="M25 29.8 L30 32.8 L35 29.8" fill="none" stroke="#14141c" stroke-width="1" opacity="1"/><path d="M65 62.2 L70 59.0 L75 62.2 L70 65.4z" fill="#8a2ab8" opacity="1"/><path d="M65 62.2 L70 65.2 L75 62.2" fill="none" stroke="#14141c" stroke-width="1" opacity="1"/><path d="M35 67.6 L40 64.4 L45 67.6 L40 70.8z" fill="#d07a18" opacity="1"/><path d="M35 67.6 L40 70.6 L45 67.6" fill="none" stroke="#14141c" stroke-width="1" opacity="1"/><path d="M65 40.6 L70 37.4 L75 40.6 L70 43.8z" fill="#1a6cd0" opacity="1"/><path d="M65 40.6 L70 43.6 L75 40.6" fill="none" stroke="#14141c" stroke-width="1" opacity="1"/><path d="M35 13.6 L40 10.4 L45 13.6 L40 16.8z" fill="#8a2ab8" opacity="1"/><path d="M35 13.6 L40 16.6 L45 13.6" fill="none" stroke="#14141c" stroke-width="1" opacity="1"/><path d="M55 73.0 L60 69.8 L65 73.0 L60 76.2z" fill="#8a2ab8" opacity="1"/><path d="M55 73.0 L60 76.0 L65 73.0" fill="none" stroke="#14141c" stroke-width="1" opacity="1"/></g><g clip-path="url(#R9)"><rect x="72" width="72" height="108" fill="#4a4a58"/><rect x="72" width="72" height="108" fill="url(#p9)"/><rect x="72" width="72" height="108" fill="#101018" opacity=".2"/><path d="M67 51.4 L72 48.2 L77 51.4 L72 54.6z" fill="#8a2ab8" opacity="0.55"/><path d="M67 51.4 L72 54.4 L77 51.4" fill="none" stroke="#14141c" stroke-width="1" opacity="0.55"/><path d="M132 46.0 L137 42.8 L142 46.0 L137 49.2z" fill="#1fb57a" opacity="0.55"/><path d="M132 46.0 L137 49.0 L142 46.0" fill="none" stroke="#14141c" stroke-width="1" opacity="0.55"/><path d="M67 73.0 L72 69.8 L77 73.0 L72 76.2z" fill="#d07a18" opacity="0.55"/><path d="M67 73.0 L72 76.0 L77 73.0" fill="none" stroke="#14141c" stroke-width="1" opacity="0.55"/><path d="M77 67.6 L82 64.4 L87 67.6 L82 70.8z" fill="#8a2ab8" opacity="0.55"/><path d="M77 67.6 L82 70.6 L87 67.6" fill="none" stroke="#14141c" stroke-width="1" opacity="0.55"/><path d="M132 56.8 L137 53.6 L142 56.8 L137 60.0z" fill="#1a6cd0" opacity="0.55"/><path d="M132 56.8 L137 59.8 L142 56.8" fill="none" stroke="#14141c" stroke-width="1" opacity="0.55"/><path d="M77 83.8 L82 80.6 L87 83.8 L82 87.0z" fill="#8a2ab8" opacity="0.55"/><path d="M77 83.8 L82 86.8 L87 83.8" fill="none" stroke="#14141c" stroke-width="1" opacity="0.55"/><path d="M87 24.4 L92 21.2 L97 24.4 L92 27.6z" fill="#8a2ab8" opacity="0.55"/><path d="M87 24.4 L92 27.4 L97 24.4" fill="none" stroke="#14141c" stroke-width="1" opacity="0.55"/><path d="M67 35.2 L72 32.0 L77 35.2 L72 38.4z" fill="#c81a8a" opacity="0.55"/><path d="M67 35.2 L72 38.2 L77 35.2" fill="none" stroke="#14141c" stroke-width="1" opacity="0.55"/><path d="M127 24.4 L132 21.2 L137 24.4 L132 27.6z" fill="#c81a8a" opacity="0.55"/><path d="M127 24.4 L132 27.4 L137 24.4" fill="none" stroke="#14141c" stroke-width="1" opacity="0.55"/><path d="M112 73.0 L117 69.8 L122 73.0 L117 76.2z" fill="#8a2ab8" opacity="0.55"/><path d="M112 73.0 L117 76.0 L122 73.0" fill="none" stroke="#14141c" stroke-width="1" opacity="0.55"/><path d="M112 83.8 L117 80.6 L122 83.8 L117 87.0z" fill="#1fb57a" opacity="0.55"/><path d="M112 83.8 L117 86.8 L122 83.8" fill="none" stroke="#14141c" stroke-width="1" opacity="0.55"/><path d="M77 94.6 L82 91.4 L87 94.6 L82 97.8z" fill="#1fb57a" opacity="0.55"/><path d="M77 94.6 L82 97.6 L87 94.6" fill="none" stroke="#14141c" stroke-width="1" opacity="0.55"/><path d="M77 2.8 L82 -0.4 L87 2.8 L82 6.0z" fill="#26262c" opacity="0.55"/><path d="M77 2.8 L82 5.8 L87 2.8" fill="none" stroke="#14141c" stroke-width="1" opacity="0.55"/><path d="M117 24.4 L122 21.2 L127 24.4 L122 27.6z" fill="#8a2ab8" opacity="0.55"/><path d="M117 24.4 L122 27.4 L127 24.4" fill="none" stroke="#14141c" stroke-width="1" opacity="0.55"/><path d="M87 100.0 L92 96.8 L97 100.0 L92 103.2z" fill="#c81a8a" opacity="0.55"/><path d="M87 100.0 L92 103.0 L97 100.0" fill="none" stroke="#14141c" stroke-width="1" opacity="0.55"/><path d="M117 40.6 L122 37.4 L127 40.6 L122 43.8z" fill="#26262c" opacity="0.55"/><path d="M117 40.6 L122 43.6 L127 40.6" fill="none" stroke="#14141c" stroke-width="1" opacity="0.55"/><path d="M87 67.6 L92 64.4 L97 67.6 L92 70.8z" fill="#1a6cd0" opacity="0.55"/><path d="M87 67.6 L92 70.6 L97 67.6" fill="none" stroke="#14141c" stroke-width="1" opacity="0.55"/><path d="M77 24.4 L82 21.2 L87 24.4 L82 27.6z" fill="#8a2ab8" opacity="0.55"/><path d="M77 24.4 L82 27.4 L87 24.4" fill="none" stroke="#14141c" stroke-width="1" opacity="0.55"/><path d="M97 19.0 L102 15.8 L107 19.0 L102 22.2z" fill="#1a6cd0" opacity="0.55"/><path d="M97 19.0 L102 22.0 L107 19.0" fill="none" stroke="#14141c" stroke-width="1" opacity="0.55"/><path d="M67 78.4 L72 75.2 L77 78.4 L72 81.6z" fill="#1a6cd0" opacity="0.55"/><path d="M67 78.4 L72 81.4 L77 78.4" fill="none" stroke="#14141c" stroke-width="1" opacity="0.55"/><path d="M72 19.0 L77 15.8 L82 19.0 L77 22.2z" fill="#1fb57a" opacity="0.55"/><path d="M72 19.0 L77 22.0 L82 19.0" fill="none" stroke="#14141c" stroke-width="1" opacity="0.55"/><path d="M77 51.4 L82 48.2 L87 51.4 L82 54.6z" fill="#c81a8a" opacity="0.55"/><path d="M77 51.4 L82 54.4 L87 51.4" fill="none" stroke="#14141c" stroke-width="1" opacity="0.55"/><path d="M97 83.8 L102 80.6 L107 83.8 L102 87.0z" fill="#d07a18" opacity="0.55"/><path d="M97 83.8 L102 86.8 L107 83.8" fill="none" stroke="#14141c" stroke-width="1" opacity="0.55"/><path d="M112 29.8 L117 26.6 L122 29.8 L117 33.0z" fill="#1a6cd0" opacity="0.55"/><path d="M112 29.8 L117 32.8 L122 29.8" fill="none" stroke="#14141c" stroke-width="1" opacity="0.55"/><path d="M77 67.6 L82 64.4 L87 67.6 L82 70.8z" fill="#d07a18" opacity="0.55"/><path d="M77 67.6 L82 70.6 L87 67.6" fill="none" stroke="#14141c" stroke-width="1" opacity="0.55"/><path d="M122 94.6 L127 91.4 L132 94.6 L127 97.8z" fill="#8a2ab8" opacity="0.55"/><path d="M122 94.6 L127 97.6 L132 94.6" fill="none" stroke="#14141c" stroke-width="1" opacity="0.55"/><path d="M112 89.2 L117 86.0 L122 89.2 L117 92.4z" fill="#8a2ab8" opacity="0.55"/><path d="M112 89.2 L117 92.2 L122 89.2" fill="none" stroke="#14141c" stroke-width="1" opacity="0.55"/><path d="M127 2.8 L132 -0.4 L137 2.8 L132 6.0z" fill="#26262c" opacity="0.55"/><path d="M127 2.8 L132 5.8 L137 2.8" fill="none" stroke="#14141c" stroke-width="1" opacity="0.55"/><path d="M102 13.6 L107 10.4 L112 13.6 L107 16.8z" fill="#26262c" opacity="0.55"/><path d="M102 13.6 L107 16.6 L112 13.6" fill="none" stroke="#14141c" stroke-width="1" opacity="0.55"/><path d="M127 100.0 L132 96.8 L137 100.0 L132 103.2z" fill="#1a6cd0" opacity="0.55"/><path d="M127 100.0 L132 103.0 L137 100.0" fill="none" stroke="#14141c" stroke-width="1" opacity="0.55"/><path d="M132 40.6 L137 37.4 L142 40.6 L137 43.8z" fill="#1fb57a" opacity="0.55"/><path d="M132 40.6 L137 43.6 L142 40.6" fill="none" stroke="#14141c" stroke-width="1" opacity="0.55"/><path d="M122 105.4 L127 102.2 L132 105.4 L127 108.6z" fill="#c81a8a" opacity="0.55"/><path d="M122 105.4 L127 108.4 L132 105.4" fill="none" stroke="#14141c" stroke-width="1" opacity="0.55"/><path d="M122 8.2 L127 5.0 L132 8.2 L127 11.4z" fill="#d07a18" opacity="0.55"/><path d="M122 8.2 L127 11.2 L132 8.2" fill="none" stroke="#14141c" stroke-width="1" opacity="0.55"/><path d="M97 24.4 L102 21.2 L107 24.4 L102 27.6z" fill="#1fb57a" opacity="0.55"/><path d="M97 24.4 L102 27.4 L107 24.4" fill="none" stroke="#14141c" stroke-width="1" opacity="0.55"/><path d="M122 51.4 L127 48.2 L132 51.4 L127 54.6z" fill="#8a2ab8" opacity="0.55"/><path d="M122 51.4 L127 54.4 L132 51.4" fill="none" stroke="#14141c" stroke-width="1" opacity="0.55"/><path d="M112 19.0 L117 15.8 L122 19.0 L117 22.2z" fill="#8a2ab8" opacity="0.55"/><path d="M112 19.0 L117 22.0 L122 19.0" fill="none" stroke="#14141c" stroke-width="1" opacity="0.55"/></g></svg>
<svg class="th" style="left:594px;top:764px" width="144" height="108" viewBox="0 0 144 108"><defs><clipPath id="L10"><rect x="0" y="0" width="72" height="108"/></clipPath><clipPath id="R10"><rect x="72" y="0" width="72" height="108"/></clipPath>
<linearGradient id="a10" x1="0" y1="0" x2="1" y2="1"><stop offset="0" stop-color="#b09880"/><stop offset=".5" stop-color="#bda68c"/><stop offset="1" stop-color="#c2ab90"/></linearGradient>
<linearGradient id="b10" x1="0" y1="0" x2="1" y2="1"><stop offset="0" stop-color="#2d2016"/><stop offset=".6" stop-color="#2a2018"/><stop offset="1" stop-color="#2c2a28"/></linearGradient>
<radialGradient id="c10" cx="88" cy="46" r="16" gradientUnits="userSpaceOnUse" gradientTransform="translate(88 46) rotate(-18) scale(1 .28) translate(-88 -46)"><stop offset="0" stop-color="#e0a020"/><stop offset=".5" stop-color="#a06810" stop-opacity=".7"/><stop offset="1" stop-color="#503008" stop-opacity="0"/></radialGradient>
<filter id="f10"><feGaussianBlur stdDeviation="1.500"/></filter></defs>
<g clip-path="url(#L10)"><rect width="72" height="108" fill="url(#a10)"/><g filter="url(#f10)">
<circle cx="78" cy="22" r="32" fill="#cdb89c"/>
<path d="M40 30 Q48 52 74 56" stroke="#a08c7c" stroke-width="4" fill="none" opacity=".6"/>
<path d="M0 90 Q30 70 50 30" stroke="#c8b298" stroke-width="8" fill="none" opacity=".5"/>
<ellipse cx="48" cy="68" rx="6" ry="4" fill="#d4c2aa" opacity=".8"/>
</g></g>
<g clip-path="url(#R10)"><rect x="72" width="72" height="108" fill="url(#b10)"/>
<rect x="72" y="20" width="40" height="50" fill="url(#c10)"/>
<g filter="url(#f10)" fill="none">
<path d="M74 52 Q90 60 110 52" stroke="#181420" stroke-width="4" opacity=".8"/>
<path d="M80 16 L96 22 M84 24 L104 30 M90 32 L108 36" stroke="#6a4a18" stroke-width="1.500" opacity=".7"/>
<path d="M110 70 L144 50 M108 80 L144 64 M104 90 L144 78 M104 100 L144 92" stroke="#5a5a5c" stroke-width="1.500" opacity=".7"/>
<path d="M84 90 L144 108 M80 100 L120 108" stroke="#444" stroke-width="2" opacity=".6"/>
</g></g></svg>
<svg class="th" style="left:756px;top:764px" width="144" height="108" viewBox="0 0 144 108"><defs><clipPath id="L11"><rect x="0" y="0" width="72" height="108"/></clipPath><clipPath id="R11"><rect x="72" y="0" width="72" height="108"/></clipPath>
<linearGradient id="a11" x1=".6" y1="0" x2=".2" y2="1"><stop offset="0" stop-color="#9a98e4"/><stop offset=".45" stop-color="#bdb6ee"/><stop offset=".8" stop-color="#ecdff2"/><stop offset="1" stop-color="#fbf6fb"/></linearGradient>
<linearGradient id="b11" x1="0" y1="0" x2="0" y2="1"><stop offset="0" stop-color="#1c1848"/><stop offset=".38" stop-color="#191a4c"/><stop offset=".5" stop-color="#5f5a78"/><stop offset=".75" stop-color="#6a6278"/><stop offset="1" stop-color="#2a2850"/></linearGradient>
<filter id="f11"><feGaussianBlur stdDeviation="1.300"/></filter></defs>
<g clip-path="url(#L11)"><rect width="72" height="108" fill="url(#a11)"/><g filter="url(#f11)">
<path d="M0 70 Q20 60 36 76 Q20 88 0 86z" fill="#f4b8d8" opacity=".7"/>
<path d="M0 14 Q20 4 40 10" stroke="#cfc0ee" stroke-width="6" fill="none" opacity=".6"/>
<path d="M64 18 L72 20 L72 108 L50 108 L40 86 L48 60 L56 36z" fill="#e9e6f8"/>
<path d="M50 60 L58 50 L60 66 L52 78z M44 84 L52 80 L50 96z" fill="#8a98d8" opacity=".7"/>
<path d="M60 40 L72 36 L72 60 L62 56z" fill="#c8c8f0" opacity=".8"/>
</g></g>
<g clip-path="url(#R11)"><rect x="72" width="72" height="108" fill="url(#b11)"/><g filter="url(#f11)">
<path d="M72 40 L144 46 L144 0 L100 0 L72 30z" fill="#1a1848" opacity=".9"/>
<path d="M72 10 L92 0 L100 0 L74 40z" fill="#3a2c58" opacity=".8"/>
<path d="M76 48 L144 48 L144 58 L80 54z" fill="#7a7488" opacity=".9"/>
<path d="M72 58 L96 66 L144 92 L144 108 L108 108 L84 84 L72 84z" fill="#8a8290" opacity=".7"/>
<path d="M72 84 L84 80 L110 108 L72 108z" fill="#1c1a3e" opacity=".9"/>
<path d="M120 62 L144 58 L144 82z" fill="#3a3658" opacity=".8"/>
<path d="M86 68 L104 80" stroke="#eae6ff" stroke-width="1.200" fill="none"/>
<path d="M72 62 L82 70 L78 84 L72 86z" fill="#0f0e2a"/>
</g></g></svg>
<svg class="th" style="left:432px;top:890px" width="144" height="108" viewBox="0 0 144 108"><defs><clipPath id="L12"><rect x="0" y="0" width="72" height="108"/></clipPath><clipPath id="R12"><rect x="72" y="0" width="72" height="108"/></clipPath>
<linearGradient id="a12" x1="0" y1="0" x2=".2" y2="1"><stop offset="0" stop-color="#8ba8ce"/><stop offset=".6" stop-color="#8aa5ca"/><stop offset="1" stop-color="#869fc1"/></linearGradient>
<filter id="f12"><feGaussianBlur stdDeviation="1.500"/></filter></defs>
<g clip-path="url(#L12)"><rect width="72" height="108" fill="url(#a12)"/><g filter="url(#f12)">
<path d="M0 20 L72 6 L72 30 L0 40z" fill="#92b0d5" opacity=".7"/>
<path d="M40 30 Q36 60 46 80" stroke="#7f9cc2" stroke-width="3" fill="none" opacity=".7"/>
<path d="M0 82 Q30 70 72 86 L72 96 Q30 84 0 96z" fill="#9db9dc" opacity=".6"/>
<path d="M30 90 L50 86 L44 98z" fill="#b4bccc" opacity=".7"/>
</g></g>
<g clip-path="url(#R12)"><rect x="72" width="72" height="108" fill="#060606"/><g filter="url(#f12)">
<path d="M72 0 L120 0 L112 14 L84 34 L72 50z" fill="#2a2a2a"/>
<path d="M72 50 L96 22 L118 16 L92 50 L72 64z" fill="#1c1c1c"/>
<path d="M104 0 L144 0 L144 34 L126 16z" fill="#161616"/>
<path d="M76 92 L104 78 L98 94z" fill="#3a3a3a"/>
<path d="M106 90 Q114 84 122 90 Q114 98 106 90z" fill="#3c3c3c"/>
<path d="M80 50 L110 30" stroke="#4a4a4a" stroke-width="1.200" fill="none"/>
</g></g></svg>
<svg class="th" style="left:594px;top:890px" width="144" height="108" viewBox="0 0 144 108"><defs><clipPath id="L13"><rect x="0" y="0" width="72" height="108"/></clipPath><clipPath id="R13"><rect x="72" y="0" width="72" height="108"/></clipPath>
<linearGradient id="a13" x1="0" y1="0" x2=".5" y2="1"><stop offset="0" stop-color="#b97210"/><stop offset=".3" stop-color="#dc9c1e"/><stop offset=".7" stop-color="#dbae20"/><stop offset="1" stop-color="#c89c18"/></linearGradient>
<radialGradient id="c13" cx="66" cy="26" r="40" gradientUnits="userSpaceOnUse"><stop offset="0" stop-color="#f4a868"/><stop offset=".6" stop-color="#eaa040" stop-opacity=".5"/><stop offset="1" stop-color="#e0a020" stop-opacity="0"/></radialGradient>
<linearGradient id="b13" x1="1" y1="0" x2="0" y2="1"><stop offset="0" stop-color="#1d50b4"/><stop offset=".35" stop-color="#2a68d0"/><stop offset=".55" stop-color="#1b4aa8"/><stop offset="1" stop-color="#163e98"/></linearGradient>
<pattern id="p13" width="13.600" height="13.600" patternUnits="userSpaceOnUse" patternTransform="rotate(0)"><g fill="#fff" opacity=".15"><circle cx="3.400" cy="3.400" r="2.700"/><circle cx="10.200" cy="10.200" r="2.700"/><path d="M3.400 3.400 L10.200 10.200" stroke="#fff" stroke-width="3.400"/></g><g fill="#7a4400" opacity=".13"><circle cx="10.200" cy="3.400" r="2.700"/><circle cx="3.400" cy="10.200" r="2.700"/></g></pattern>
<pattern id="q13" width="13.600" height="13.600" patternUnits="userSpaceOnUse"><g fill="#0c2a78" opacity=".35"><circle cx="3.400" cy="3.400" r="2.900"/><circle cx="10.200" cy="10.200" r="2.900"/><path d="M3.400 3.400 L10.200 10.200" stroke="#0c2a78" stroke-width="3.600"/></g></pattern>
<filter id="f13" filterUnits="userSpaceOnUse" x="0" y="0" width="144" height="108"><feGaussianBlur stdDeviation=".45"/></filter></defs>
<g clip-path="url(#L13)"><rect width="72" height="108" fill="url(#a13)"/><rect width="72" height="108" fill="url(#c13)"/><rect width="72" height="108" fill="url(#p13)"/></g>
<g clip-path="url(#R13)"><rect x="72" width="72" height="108" fill="url(#b13)"/><rect x="72" width="72" height="108" fill="url(#q13)"/>
<g fill="none" stroke="#a9ccf4" stroke-width="1" filter="url(#f13)"><circle cx="82.2" cy="30" r="3.200"/><circle cx="89" cy="36" r="3.200"/><circle cx="109.3" cy="15.7" r="3.200"/><circle cx="124.2" cy="2.8" r="3.200"/><circle cx="137.8" cy="43.5" r="3.200"/><circle cx="123.5" cy="63.9" r="3.200"/><circle cx="75.4" cy="91.7" r="3.200"/><circle cx="123.5" cy="98.4" r="3.200"/><circle cx="142.5" cy="98.4" r="3.200"/><circle cx="142.5" cy="30" r="3.200"/><circle cx="142.5" cy="57" r="3.200"/></g><g fill="none" filter="url(#f13)"><path d="M96.4 29.3 L102.5 23.2" stroke="#a9ccf4" stroke-width="7.400" stroke-linecap="round" stroke-linejoin="round"/><path d="M96.4 29.3 L102.5 23.2" stroke="#2458bc" stroke-width="5.400" stroke-linecap="round" stroke-linejoin="round"/></g><g fill="none" stroke="#a9ccf4" stroke-width="1" filter="url(#f13)"></g><g fill="none" filter="url(#f13)"><path d="M131.7 7.6 L137.8 2.2" stroke="#a9ccf4" stroke-width="7.400" stroke-linecap="round" stroke-linejoin="round"/><path d="M131.7 7.6 L137.8 2.2" stroke="#2458bc" stroke-width="5.400" stroke-linecap="round" stroke-linejoin="round"/></g><g fill="none" stroke="#a9ccf4" stroke-width="1" filter="url(#f13)"></g><g fill="none" filter="url(#f13)"><path d="M123.5 36 L130.3 30" stroke="#a9ccf4" stroke-width="7.400" stroke-linecap="round" stroke-linejoin="round"/><path d="M123.5 36 L130.3 30" stroke="#2458bc" stroke-width="5.400" stroke-linecap="round" stroke-linejoin="round"/></g><g fill="none" stroke="#a9ccf4" stroke-width="1" filter="url(#f13)"></g><g fill="none" filter="url(#f13)"><path d="M103.2 43.5 L110 50.3 L116.7 57" stroke="#a9ccf4" stroke-width="7.400" stroke-linecap="round" stroke-linejoin="round"/><path d="M103.2 43.5 L110 50.3 L116.7 57" stroke="#2458bc" stroke-width="5.400" stroke-linecap="round" stroke-linejoin="round"/></g><g fill="none" stroke="#a9ccf4" stroke-width="1" filter="url(#f13)"></g><g fill="none" filter="url(#f13)"><path d="M130.3 57 L137 63.8 L143.8 70.6" stroke="#a9ccf4" stroke-width="7.400" stroke-linecap="round" stroke-linejoin="round"/><path d="M130.3 57 L137 63.8 L143.8 70.6" stroke="#2458bc" stroke-width="5.400" stroke-linecap="round" stroke-linejoin="round"/></g><g fill="none" stroke="#a9ccf4" stroke-width="1" filter="url(#f13)"></g><g fill="none" filter="url(#f13)"><path d="M116.7 91.7 L110 98.4 L116.7 105" stroke="#a9ccf4" stroke-width="7.400" stroke-linecap="round" stroke-linejoin="round"/><path d="M116.7 91.7 L110 98.4 L116.7 105" stroke="#2458bc" stroke-width="5.400" stroke-linecap="round" stroke-linejoin="round"/></g><g fill="none" stroke="#a9ccf4" stroke-width="1" filter="url(#f13)"></g></g></svg>
<div class="sb"></div>
</div></body></html>
